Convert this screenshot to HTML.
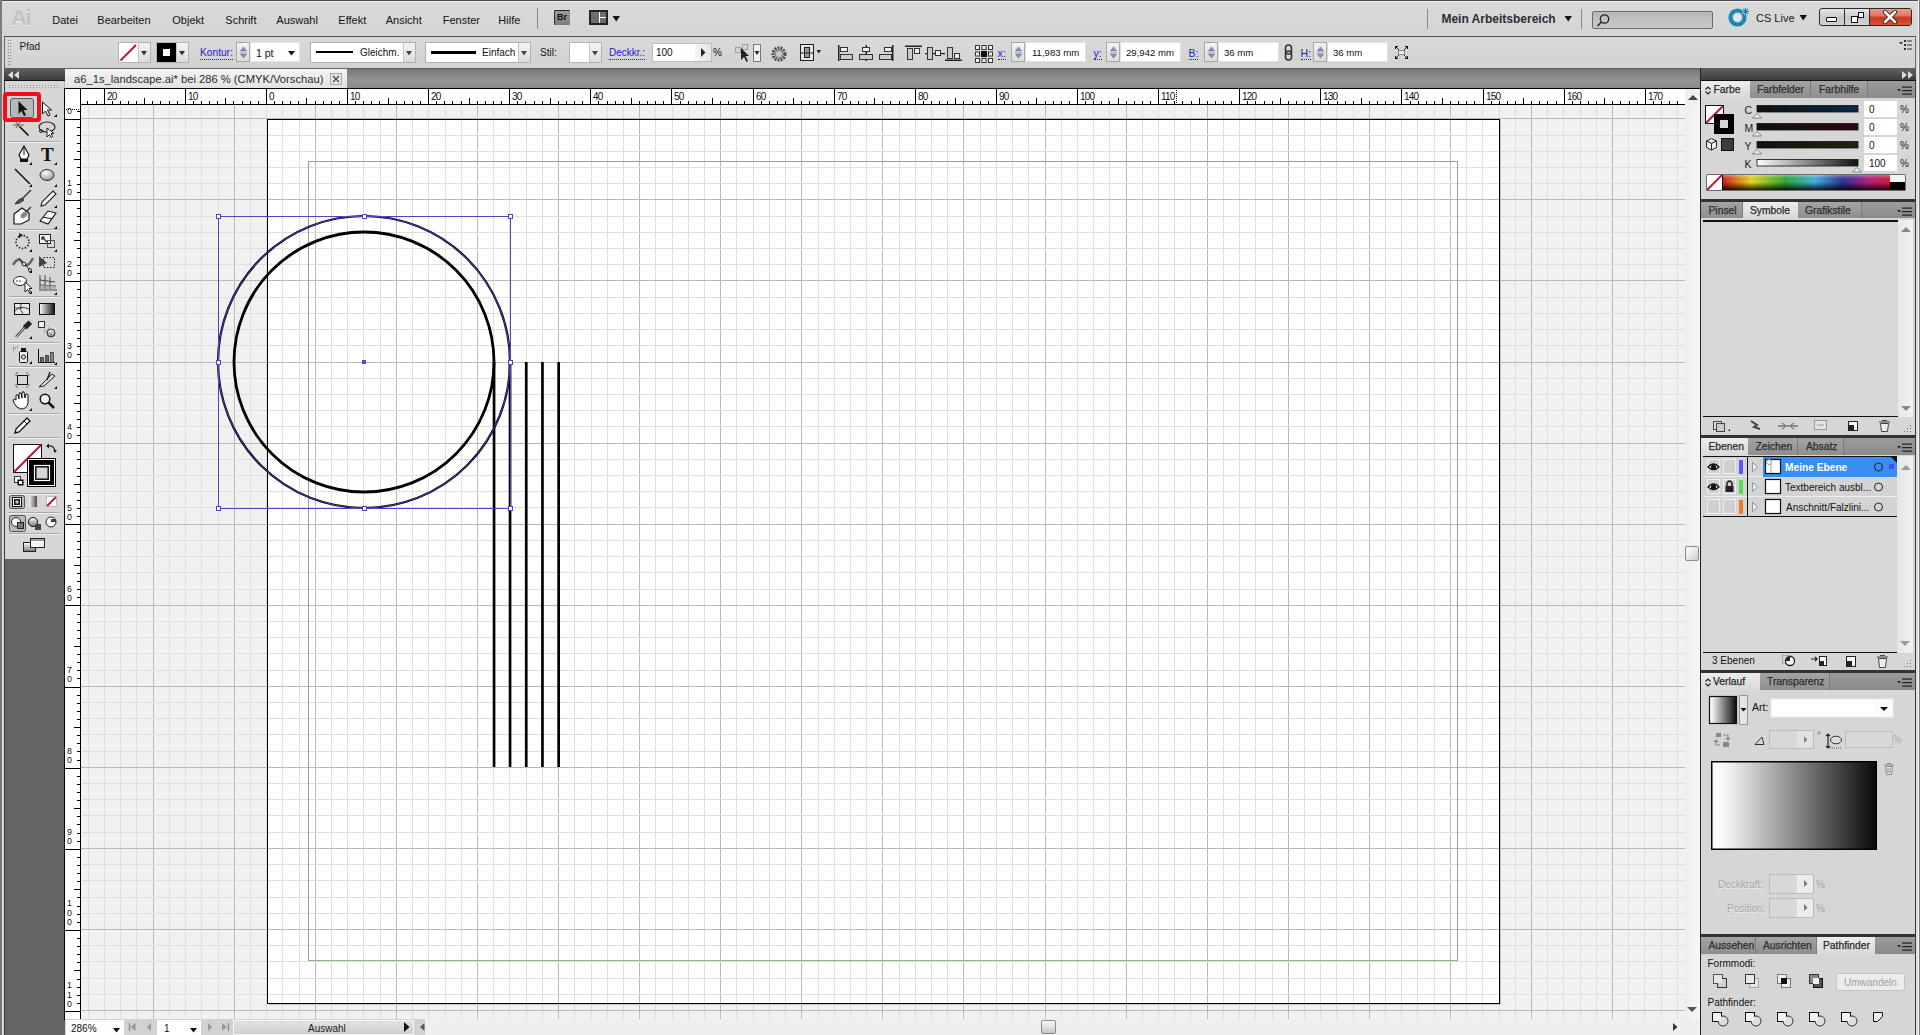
<!DOCTYPE html><html><head><meta charset="utf-8"><style>
*{margin:0;padding:0;box-sizing:border-box}
html,body{width:1920px;height:1035px;overflow:hidden;background:#d6d6d6;font-family:"Liberation Sans",sans-serif;font-size:12px;color:#111}
.a{position:absolute}
.t{position:absolute;white-space:nowrap;line-height:1}
</style></head><body>
<div class="a" style="left:0px;top:0px;width:1920px;height:36px;background:linear-gradient(#dadada,#d4d4d4)"></div>
<div class="a" style="left:0px;top:0px;width:1920px;height:1px;background:#4a4a4a"></div>
<div class="a" style="left:2px;top:1px;width:1916px;height:1px;background:#f2f2f2"></div>
<div class="t" style="left:11px;top:7px;font-size:22px;font-weight:bold;color:#c2c2c2;letter-spacing:-1.5px;text-shadow:0 1px 0 #ececec">Ai</div>
<div class="t" style="left:52.3px;top:15.31px;font-size:11px;color:#141414;font-weight:normal;">Datei</div>
<div class="t" style="left:97.3px;top:15.31px;font-size:11px;color:#141414;font-weight:normal;">Bearbeiten</div>
<div class="t" style="left:172.3px;top:15.31px;font-size:11px;color:#141414;font-weight:normal;">Objekt</div>
<div class="t" style="left:225.3px;top:15.31px;font-size:11px;color:#141414;font-weight:normal;">Schrift</div>
<div class="t" style="left:276.3px;top:15.31px;font-size:11px;color:#141414;font-weight:normal;">Auswahl</div>
<div class="t" style="left:338.3px;top:15.31px;font-size:11px;color:#141414;font-weight:normal;">Effekt</div>
<div class="t" style="left:385.7px;top:15.31px;font-size:11px;color:#141414;font-weight:normal;">Ansicht</div>
<div class="t" style="left:442.7px;top:15.31px;font-size:11px;color:#141414;font-weight:normal;">Fenster</div>
<div class="t" style="left:498.3px;top:15.31px;font-size:11px;color:#141414;font-weight:normal;">Hilfe</div>
<div class="a" style="left:537px;top:8px;width:1px;height:21px;background:#8a8a8a"></div>
<div class="a" style="left:554px;top:10px;width:16px;height:15px;background:linear-gradient(#9a9a9a,#7c7c7c);border-top:1px solid #222;border-left:1px solid #333;border-radius:1px"></div>
<div class="t" style="left:557px;top:13px;font-size:9px;font-weight:bold;color:#111">Br</div>
<div class="a" style="left:589px;top:10px;width:19px;height:15px;background:#fff;border:2px solid #222"></div>
<div class="a" style="left:591px;top:12px;width:8px;height:11px;background:#6e6e6e"></div>
<div class="a" style="left:600px;top:12px;width:6px;height:5px;background:#6e6e6e"></div>
<div class="a" style="left:600px;top:18px;width:6px;height:5px;background:#6e6e6e"></div>
<svg class="a" style="left:612px;top:15px" width="9" height="8"><path d="M0.5 1 L8 1 L4.25 6.5 Z" fill="#111"/></svg>
<div class="a" style="left:1427px;top:9px;width:1px;height:20px;background:#8a8a8a"></div>
<div class="t" style="left:1441.4px;top:13.22px;font-size:12px;color:#2a2e38;font-weight:bold;">Mein Arbeitsbereich</div>
<svg class="a" style="left:1564px;top:15px" width="9" height="8"><path d="M0.5 1 L8 1 L4.25 6.5 Z" fill="#111"/></svg>
<div class="a" style="left:1581px;top:9px;width:1px;height:20px;background:#8a8a8a"></div>
<div class="a" style="left:1592px;top:11px;width:121px;height:18px;background:linear-gradient(#b8b8b8,#c8c8c8);border:1px solid #6a6a6a;border-radius:2px"></div>
<svg class="a" style="left:1595px;top:12px" width="16" height="16"><circle cx="9.5" cy="7" r="4.2" fill="none" stroke="#222" stroke-width="1.3"/><path d="M6.5 10 L2.5 14" stroke="#222" stroke-width="1.6"/></svg>
<svg class="a" style="left:1727px;top:7px" width="24" height="21"><circle cx="10.5" cy="10.5" r="7" fill="none" stroke="#1b87b3" stroke-width="4.2"/><circle cx="10.5" cy="10.5" r="3.5" fill="#dde9ee"/><circle cx="18.5" cy="4.5" r="3.6" fill="#dcdcdc"/><path d="M18.5 1 v7 M15 4.5 h7 M16 2 l5 5 M21 2 l-5 5" stroke="#1b87b3" stroke-width="1.1"/></svg>
<div class="t" style="left:1756px;top:13.31px;font-size:11px;color:#1a1a1a;font-weight:normal;">CS Live</div>
<svg class="a" style="left:1799px;top:14px" width="9" height="8"><path d="M0.5 1 L8 1 L4.25 6.5 Z" fill="#111"/></svg>
<div class="a" style="left:1819px;top:8px;width:93px;height:18px;border:1px solid #2a2a2a;border-radius:3px;background:linear-gradient(#e6e6e6,#c8c8c8 55%,#d4d4d4)"></div>
<div class="a" style="left:1844px;top:9px;width:1px;height:16px;background:#2a2a2a"></div>
<div class="a" style="left:1869px;top:9px;width:1px;height:16px;background:#2a2a2a"></div>
<div class="a" style="left:1870px;top:9px;width:41px;height:16px;background:linear-gradient(#e89a8c,#e07a68 40%,#c8391c 55%,#d8553a);border-radius:0 2px 2px 0"></div>
<div class="a" style="left:1826px;top:17px;width:11px;height:5px;background:#fff;border:1px solid #111;border-radius:1px"></div>
<div class="a" style="left:1858px;top:12px;width:6px;height:6px;background:#fff;border:1px solid #111"></div>
<div class="a" style="left:1851px;top:16px;width:7px;height:7px;background:#fff;border:1px solid #111"></div>
<svg class="a" style="left:1882px;top:10px" width="16" height="14"><path d="M3 2 L13 12 M13 2 L3 12" stroke="#3a1a10" stroke-width="4.4" stroke-linecap="round"/><path d="M3 2 L13 12 M13 2 L3 12" stroke="#fff" stroke-width="2.6" stroke-linecap="round"/></svg>
<div class="a" style="left:0;top:0;width:2px;height:1035px;background:#7a7a7a"></div>
<div class="a" style="left:1918px;top:0;width:2px;height:1035px;background:#9a9a9a"></div>
<div class="a" style="left:4px;top:36px;width:1912px;height:33px;background:linear-gradient(#d9d9d9,#d2d2d2);border-top:1px solid #4e4e4e;border-left:1px solid #6a6a6a;border-right:1px solid #6a6a6a"></div>
<div class="a" style="left:4px;top:68px;width:1912px;height:1px;background:#8a8a8a"></div>
<svg class="a" style="left:8px;top:40px" width="4" height="26"><rect x="0" y="0" width="1" height="1" fill="#888"/><rect x="2" y="0" width="1" height="1" fill="#888"/><rect x="0" y="3" width="1" height="1" fill="#888"/><rect x="2" y="3" width="1" height="1" fill="#888"/><rect x="0" y="6" width="1" height="1" fill="#888"/><rect x="2" y="6" width="1" height="1" fill="#888"/><rect x="0" y="9" width="1" height="1" fill="#888"/><rect x="2" y="9" width="1" height="1" fill="#888"/><rect x="0" y="12" width="1" height="1" fill="#888"/><rect x="2" y="12" width="1" height="1" fill="#888"/><rect x="0" y="15" width="1" height="1" fill="#888"/><rect x="2" y="15" width="1" height="1" fill="#888"/><rect x="0" y="18" width="1" height="1" fill="#888"/><rect x="2" y="18" width="1" height="1" fill="#888"/><rect x="0" y="21" width="1" height="1" fill="#888"/><rect x="2" y="21" width="1" height="1" fill="#888"/><rect x="0" y="24" width="1" height="1" fill="#888"/><rect x="2" y="24" width="1" height="1" fill="#888"/></svg>
<div class="t" style="left:19.5px;top:42.10px;font-size:10px;color:#1a1a1a;font-weight:normal;">Pfad</div>
<div class="a" style="left:118px;top:42px;width:33px;height:21px;background:#fff;border:1px solid #b4b4b4"></div>
<div class="a" style="left:138px;top:43px;width:12px;height:19px;background:linear-gradient(#f4f4f4,#dcdcdc);border-left:1px solid #c4c4c4"></div>
<svg class="a" style="left:119px;top:43px" width="19" height="19"><path d="M1.5 17.5 L17 2" stroke="#c2123a" stroke-width="2"/></svg>
<svg class="a" style="left:141px;top:51px" width="6" height="5"><path d="M0 0 L6 0 L3.0 4.5 Z" fill="#333"/></svg>
<div class="a" style="left:156px;top:42px;width:33px;height:21px;background:#fff;border:1px solid #b4b4b4"></div>
<div class="a" style="left:157px;top:43px;width:19px;height:19px;background:#000"></div>
<div class="a" style="left:163px;top:49px;width:7px;height:7px;background:#fff"></div>
<div class="a" style="left:176px;top:43px;width:12px;height:19px;background:linear-gradient(#f4f4f4,#dcdcdc);border-left:1px solid #c4c4c4"></div>
<svg class="a" style="left:179px;top:51px" width="6" height="5"><path d="M0 0 L6 0 L3.0 4.5 Z" fill="#333"/></svg>
<div class="t" style="left:200px;top:47.94px;font-size:10.2px;color:#2222cc;font-weight:normal;border-bottom:1px dotted #2222cc;padding-bottom:1px">Kontur:</div>
<div class="a" style="left:236px;top:42px;width:14px;height:20px;background:linear-gradient(#f2f2f2,#dcdcdc);border:1px solid #a8a8a8"></div>
<svg class="a" style="left:239px;top:45px" width="9" height="15"><path d="M1.5 6 L4.5 2 L7.5 6 Z" fill="#8a94c0" stroke="#5a64a0" stroke-width="0.6"/><path d="M1.5 9 L4.5 13 L7.5 9 Z" fill="#8a94c0" stroke="#5a64a0" stroke-width="0.6"/><path d="M0 7.5 H9" stroke="#c4c4c4"/></svg>
<div class="a" style="left:250px;top:42px;width:50px;height:20px;background:#fff;border:1px solid #e4e4e4"></div>
<div class="t" style="left:256px;top:47.70px;font-size:10.5px;color:#111;font-weight:normal;">1 pt</div>
<svg class="a" style="left:288px;top:51px" width="7" height="5"><path d="M0 0 L7 0 L3.5 4.5 Z" fill="#111"/></svg>
<div class="a" style="left:310px;top:42px;width:106px;height:21px;background:#fff;border:1px solid #b0b0b0"></div>
<div class="a" style="left:316px;top:51px;width:37px;height:2px;background:#000"></div>
<div class="t" style="left:360px;top:48.10px;font-size:10px;color:#111;font-weight:normal;">Gleichm.</div>
<div class="a" style="left:403px;top:43px;width:12px;height:19px;background:linear-gradient(#f4f4f4,#dcdcdc);border-left:1px solid #c4c4c4"></div>
<svg class="a" style="left:406px;top:51px" width="6" height="5"><path d="M0 0 L6 0 L3.0 4.5 Z" fill="#444"/></svg>
<div class="a" style="left:425px;top:42px;width:106px;height:21px;background:#fff;border:1px solid #b0b0b0"></div>
<div class="a" style="left:431px;top:51px;width:45px;height:3px;background:#000"></div>
<div class="t" style="left:482px;top:48.10px;font-size:10px;color:#111;font-weight:normal;">Einfach</div>
<div class="a" style="left:518px;top:43px;width:12px;height:19px;background:linear-gradient(#f4f4f4,#dcdcdc);border-left:1px solid #c4c4c4"></div>
<svg class="a" style="left:521px;top:51px" width="6" height="5"><path d="M0 0 L6 0 L3.0 4.5 Z" fill="#444"/></svg>
<div class="t" style="left:540px;top:48.10px;font-size:10px;color:#111;font-weight:normal;">Stil:</div>
<div class="a" style="left:569px;top:42px;width:33px;height:21px;background:#fff;border:1px solid #b4b4b4"></div>
<div class="a" style="left:589px;top:43px;width:12px;height:19px;background:linear-gradient(#f4f4f4,#dcdcdc);border-left:1px solid #c4c4c4"></div>
<svg class="a" style="left:592px;top:51px" width="6" height="5"><path d="M0 0 L6 0 L3.0 4.5 Z" fill="#444"/></svg>
<div class="t" style="left:609px;top:48.10px;font-size:10px;color:#2222cc;font-weight:normal;border-bottom:1px dotted #2222cc;padding-bottom:1px">Deckkr.:</div>
<div class="a" style="left:652px;top:43px;width:60px;height:19px;background:#fff;border:1px solid #bcbcbc"></div>
<div class="a" style="left:695px;top:44px;width:16px;height:17px;background:linear-gradient(90deg,#f4f4f4,#e4e4e4)"></div>
<svg class="a" style="left:701px;top:48px" width="5" height="9"><path d="M0 0 L4.5 4.5 L0 9 Z" fill="#222"/></svg>
<div class="t" style="left:656px;top:48.10px;font-size:10px;color:#111;font-weight:normal;">100</div>
<div class="t" style="left:713px;top:48.10px;font-size:10px;color:#111;font-weight:normal;">%</div>
<svg class="a" style="left:734px;top:43px" width="28" height="20"><rect x="1.5" y="4.5" width="5" height="5" fill="none" stroke="#666" stroke-dasharray="1 1"/><rect x="8.5" y="1.5" width="5" height="5" fill="none" stroke="#666" stroke-dasharray="1 1"/><path d="M7 5 L7 17 L10 14 L12.5 19 L14 18 L11.5 13 L15 13 Z" fill="#222"/><rect x="19.5" y="1.5" width="7" height="17" fill="#f2f2f2" stroke="#777"/><path d="M20.5 8 L25.5 8 L23 12 Z" fill="#222"/></svg>
<svg class="a" style="left:771px;top:46px" width="16" height="16"><circle cx="8" cy="8" r="6" fill="none" stroke="#444" stroke-width="3.2" stroke-dasharray="1.8 1.1"/><circle cx="8" cy="8" r="4.6" fill="#8a8a8a"/><circle cx="8" cy="8" r="3" fill="#c8c8c8"/></svg>
<svg class="a" style="left:800px;top:44px" width="24" height="18"><rect x="0.5" y="0.5" width="13" height="16" fill="#e6e6e6" stroke="#222"/><rect x="4.5" y="3.5" width="5" height="10" fill="#999" stroke="#222"/><path d="M0 9 H14" stroke="#222"/><path d="M16.5 6 L21 6 L18.75 9.5 Z" fill="#222"/></svg>
<svg class="a" style="left:838px;top:45px" width="130" height="17"><rect x="0" y="0" width="1.5" height="16" fill="#222"/><rect x="2.5" y="2.5" width="7" height="4" fill="#eee" stroke="#333"/><rect x="2.5" y="9.5" width="12" height="5" fill="#ccc" stroke="#333"/><rect x="27.5" y="0" width="1.5" height="16" fill="#222"/><rect x="24.5" y="2.5" width="7" height="4" fill="#eee" stroke="#333"/><rect x="21.5" y="9.5" width="13" height="5" fill="#ccc" stroke="#333"/><rect x="54" y="0" width="1.5" height="16" fill="#222"/><rect x="46.5" y="2.5" width="7" height="4" fill="#eee" stroke="#333"/><rect x="41.5" y="9.5" width="12" height="5" fill="#ccc" stroke="#333"/><rect x="67" y="0.5" width="17" height="1.5" fill="#222"/><rect x="69.5" y="3.5" width="5" height="11" fill="#ccc" stroke="#333"/><rect x="76.5" y="3.5" width="5" height="5" fill="#eee" stroke="#333"/><rect x="87" y="8" width="20" height="1.2" fill="#222"/><rect x="89.5" y="2.5" width="5" height="12" fill="#ccc" stroke="#333"/><rect x="97.5" y="5.5" width="5" height="5" fill="#eee" stroke="#333"/><rect x="107" y="14.5" width="17" height="1.5" fill="#222"/><rect x="109.5" y="2.5" width="5" height="11" fill="#ccc" stroke="#333"/><rect x="116.5" y="8.5" width="5" height="5" fill="#eee" stroke="#333"/></svg>
<svg class="a" style="left:974px;top:44px" width="20" height="19"><rect x="1.5" y="1.5" width="4" height="4" fill="#f4f4f4" stroke="#333"/><rect x="1.5" y="8.0" width="4" height="4" fill="#f4f4f4" stroke="#333"/><rect x="1.5" y="14.5" width="4" height="4" fill="#f4f4f4" stroke="#333"/><rect x="8.0" y="1.5" width="4" height="4" fill="#f4f4f4" stroke="#333"/><rect x="8.0" y="8.0" width="4" height="4" fill="#f4f4f4" stroke="#333"/><rect x="8.0" y="14.5" width="4" height="4" fill="#f4f4f4" stroke="#333"/><rect x="14.5" y="1.5" width="4" height="4" fill="#f4f4f4" stroke="#333"/><rect x="14.5" y="8.0" width="4" height="4" fill="#f4f4f4" stroke="#333"/><rect x="14.5" y="14.5" width="4" height="4" fill="#f4f4f4" stroke="#333"/><rect x="7" y="7" width="6" height="6" fill="#111"/></svg>
<div class="t" style="left:997.5px;top:47.70px;font-size:10.5px;color:#2222cc;font-weight:normal;border-bottom:1px dotted #2222cc;padding-bottom:1px">x:</div>
<div class="a" style="left:1011px;top:42px;width:14px;height:20px;background:linear-gradient(#f2f2f2,#dcdcdc);border:1px solid #a8a8a8"></div>
<svg class="a" style="left:1014px;top:45px" width="9" height="15"><path d="M1.5 6 L4.5 2 L7.5 6 Z" fill="#8a94c0" stroke="#5a64a0" stroke-width="0.6"/><path d="M1.5 9 L4.5 13 L7.5 9 Z" fill="#8a94c0" stroke="#5a64a0" stroke-width="0.6"/><path d="M0 7.5 H9" stroke="#c4c4c4"/></svg>
<div class="a" style="left:1025px;top:42px;width:61px;height:20px;background:#fff;border:1px solid #e0e0e0"></div>
<div class="t" style="left:1032px;top:48.42px;font-size:9.6px;color:#111;font-weight:normal;">11,983 mm</div>
<div class="t" style="left:1093.5px;top:47.70px;font-size:10.5px;color:#2222cc;font-weight:normal;border-bottom:1px dotted #2222cc;padding-bottom:1px">y:</div>
<div class="a" style="left:1106px;top:42px;width:14px;height:20px;background:linear-gradient(#f2f2f2,#dcdcdc);border:1px solid #a8a8a8"></div>
<svg class="a" style="left:1109px;top:45px" width="9" height="15"><path d="M1.5 6 L4.5 2 L7.5 6 Z" fill="#8a94c0" stroke="#5a64a0" stroke-width="0.6"/><path d="M1.5 9 L4.5 13 L7.5 9 Z" fill="#8a94c0" stroke="#5a64a0" stroke-width="0.6"/><path d="M0 7.5 H9" stroke="#c4c4c4"/></svg>
<div class="a" style="left:1120px;top:42px;width:61px;height:20px;background:#fff;border:1px solid #e0e0e0"></div>
<div class="t" style="left:1126px;top:48.42px;font-size:9.6px;color:#111;font-weight:normal;">29,942 mm</div>
<div class="t" style="left:1188.5px;top:47.70px;font-size:10.5px;color:#2222cc;font-weight:normal;border-bottom:1px dotted #2222cc;padding-bottom:1px">B:</div>
<div class="a" style="left:1204px;top:42px;width:14px;height:20px;background:linear-gradient(#f2f2f2,#dcdcdc);border:1px solid #a8a8a8"></div>
<svg class="a" style="left:1207px;top:45px" width="9" height="15"><path d="M1.5 6 L4.5 2 L7.5 6 Z" fill="#8a94c0" stroke="#5a64a0" stroke-width="0.6"/><path d="M1.5 9 L4.5 13 L7.5 9 Z" fill="#8a94c0" stroke="#5a64a0" stroke-width="0.6"/><path d="M0 7.5 H9" stroke="#c4c4c4"/></svg>
<div class="a" style="left:1218px;top:42px;width:61px;height:20px;background:#fff;border:1px solid #e0e0e0"></div>
<div class="t" style="left:1224px;top:48.42px;font-size:9.6px;color:#111;font-weight:normal;">36 mm</div>
<svg class="a" style="left:1284px;top:44px" width="10" height="18"><rect x="1.5" y="1" width="6" height="9" rx="3" fill="none" stroke="#333" stroke-width="1.6"/><rect x="1.5" y="7" width="6" height="9" rx="3" fill="none" stroke="#333" stroke-width="1.6"/></svg>
<div class="t" style="left:1300.5px;top:47.70px;font-size:10.5px;color:#2222cc;font-weight:normal;border-bottom:1px dotted #2222cc;padding-bottom:1px">H:</div>
<div class="a" style="left:1313px;top:42px;width:14px;height:20px;background:linear-gradient(#f2f2f2,#dcdcdc);border:1px solid #a8a8a8"></div>
<svg class="a" style="left:1316px;top:45px" width="9" height="15"><path d="M1.5 6 L4.5 2 L7.5 6 Z" fill="#8a94c0" stroke="#5a64a0" stroke-width="0.6"/><path d="M1.5 9 L4.5 13 L7.5 9 Z" fill="#8a94c0" stroke="#5a64a0" stroke-width="0.6"/><path d="M0 7.5 H9" stroke="#c4c4c4"/></svg>
<div class="a" style="left:1327px;top:42px;width:61px;height:20px;background:#fff;border:1px solid #e0e0e0"></div>
<div class="t" style="left:1333px;top:48.42px;font-size:9.6px;color:#111;font-weight:normal;">36 mm</div>
<svg class="a" style="left:1394px;top:45px" width="15" height="15"><path d="M1.5 1.5 L5 5 M13.5 1.5 L10 5 M1.5 13.5 L5 10 M13.5 13.5 L10 10" stroke="#222" stroke-width="1"/><path d="M1 1 h3 v1 h-2 v2 h-1 Z M14 1 h-3 v1 h2 v2 h1 Z M1 14 h3 v-1 h-2 v-2 h-1 Z M14 14 h-3 v-1 h2 v-2 h1 Z" fill="#111"/><rect x="4.5" y="5.5" width="6" height="4" fill="#e8e8e8" stroke="#888"/></svg>
<svg class="a" style="left:1899px;top:40px" width="14" height="11"><path d="M0 2 L4 2 L2 4.5 Z" fill="#333"/><rect x="5" y="0" width="2" height="2" fill="#333"/><rect x="8" y="0.5" width="5" height="1" fill="#333"/><rect x="5" y="4" width="2" height="2" fill="#333"/><rect x="8" y="4.5" width="5" height="1" fill="#333"/><rect x="5" y="8" width="2" height="2" fill="#333"/><rect x="8" y="8.5" width="5" height="1" fill="#333"/></svg>
<div class="a" style="left:4px;top:68px;width:61px;height:13px;background:linear-gradient(#606060,#3c3c3c);border-bottom:1px solid #111"></div>
<svg class="a" style="left:8px;top:71px" width="12" height="8"><path d="M5 0 L0 4 L5 8 Z M11 0 L6 4 L11 8 Z" fill="#ddd"/></svg>
<div class="a" style="left:4px;top:81px;width:61px;height:478px;background:#d6d6d6;border-left:1px solid #3a3a3a;border-right:1px solid #b8b8b8"></div>
<div class="a" style="left:4px;top:559px;width:61px;height:476px;background:#646464;border-left:1px solid #3a3a3a"></div>
<svg class="a" style="left:0px;top:81px" width="66" height="478" viewBox="0 81 66 478"><rect x="9" y="85" width="1" height="1" fill="#999"/><rect x="9" y="87" width="1" height="1" fill="#999"/><rect x="12" y="85" width="1" height="1" fill="#999"/><rect x="12" y="87" width="1" height="1" fill="#999"/><rect x="15" y="85" width="1" height="1" fill="#999"/><rect x="15" y="87" width="1" height="1" fill="#999"/><rect x="18" y="85" width="1" height="1" fill="#999"/><rect x="18" y="87" width="1" height="1" fill="#999"/><rect x="21" y="85" width="1" height="1" fill="#999"/><rect x="21" y="87" width="1" height="1" fill="#999"/><rect x="24" y="85" width="1" height="1" fill="#999"/><rect x="24" y="87" width="1" height="1" fill="#999"/><rect x="27" y="85" width="1" height="1" fill="#999"/><rect x="27" y="87" width="1" height="1" fill="#999"/><rect x="30" y="85" width="1" height="1" fill="#999"/><rect x="30" y="87" width="1" height="1" fill="#999"/><rect x="33" y="85" width="1" height="1" fill="#999"/><rect x="33" y="87" width="1" height="1" fill="#999"/><rect x="36" y="85" width="1" height="1" fill="#999"/><rect x="36" y="87" width="1" height="1" fill="#999"/><rect x="39" y="85" width="1" height="1" fill="#999"/><rect x="39" y="87" width="1" height="1" fill="#999"/><rect x="42" y="85" width="1" height="1" fill="#999"/><rect x="42" y="87" width="1" height="1" fill="#999"/><rect x="45" y="85" width="1" height="1" fill="#999"/><rect x="45" y="87" width="1" height="1" fill="#999"/><rect x="48" y="85" width="1" height="1" fill="#999"/><rect x="48" y="87" width="1" height="1" fill="#999"/><rect x="51" y="85" width="1" height="1" fill="#999"/><rect x="51" y="87" width="1" height="1" fill="#999"/><rect x="54" y="85" width="1" height="1" fill="#999"/><rect x="54" y="87" width="1" height="1" fill="#999"/><rect x="57" y="85" width="1" height="1" fill="#999"/><rect x="57" y="87" width="1" height="1" fill="#999"/><rect x="8" y="141" width="52" height="1" fill="#aaa"/><rect x="8" y="142" width="52" height="1" fill="#f0f0f0"/><rect x="8" y="229" width="52" height="1" fill="#aaa"/><rect x="8" y="230" width="52" height="1" fill="#f0f0f0"/><rect x="8" y="296" width="52" height="1" fill="#aaa"/><rect x="8" y="297" width="52" height="1" fill="#f0f0f0"/><rect x="8" y="342" width="52" height="1" fill="#aaa"/><rect x="8" y="343" width="52" height="1" fill="#f0f0f0"/><rect x="8" y="366" width="52" height="1" fill="#aaa"/><rect x="8" y="367" width="52" height="1" fill="#f0f0f0"/><rect x="8" y="413" width="52" height="1" fill="#aaa"/><rect x="8" y="414" width="52" height="1" fill="#f0f0f0"/><rect x="8" y="437" width="52" height="1" fill="#aaa"/><rect x="8" y="438" width="52" height="1" fill="#f0f0f0"/><rect x="8" y="493" width="52" height="1" fill="#aaa"/><rect x="8" y="494" width="52" height="1" fill="#f0f0f0"/><rect x="8" y="512" width="52" height="1" fill="#aaa"/><rect x="8" y="513" width="52" height="1" fill="#f0f0f0"/><rect x="8" y="533" width="52" height="1" fill="#aaa"/><rect x="8" y="534" width="52" height="1" fill="#f0f0f0"/><rect x="10.5" y="98.5" width="23" height="19" rx="2.5" fill="#b8b8bc" stroke="#5a5a5a"/><rect x="5" y="94" width="34" height="26" rx="1.5" fill="none" stroke="#f01018" stroke-width="4"/><path d="M18.5 101 L18.5 114 L21.5 111 L24 116 L26 115 L23.5 110 L27.5 110 Z" fill="#111"/><path d="M42.5 102 L42.5 114 L45.5 111 L48 116 L50 115 L47.5 110 L51.5 110 Z" fill="#fff" stroke="#111" stroke-width="1"/><path d="M54 117 L57 117 L57 114 Z" fill="#111"/><path d="M19.5 126.5 L28.5 135.5" stroke="#111" stroke-width="1.7"/><path d="M13 125 h11 M16 122 l4 6 M20 122 l-4 6" stroke="#555" stroke-width="0.9"/><ellipse cx="47" cy="127" rx="8" ry="5" fill="none" stroke="#222" stroke-width="1.2"/><path d="M47 128 L47 137 L49.5 134.5 L51 137.5 L52.5 136.5 L51 133.5 L54 133.5 Z" fill="#fff" stroke="#222"/><circle cx="41" cy="131" r="1.5" fill="none" stroke="#222"/><path d="M24 146 L29 155 L27 159 L21 159 L19 155 Z" fill="#fff" stroke="#111" stroke-width="1.2"/><path d="M24 146 v9" stroke="#111"/><rect x="20" y="159" width="8" height="3" fill="#111"/><path d="M29 165 L32 165 L32 162 Z" fill="#111"/><text x="41" y="161" font-family="Liberation Serif" font-size="19" font-weight="bold" fill="#111">T</text><path d="M54 165 L57 165 L57 162 Z" fill="#111"/><path d="M15 169 L30 184" stroke="#111" stroke-width="1.5"/><path d="M29 187 L32 187 L32 184 Z" fill="#111"/><defs><radialGradient id="eg" cx="0.4" cy="0.3" r="0.8"><stop offset="0" stop-color="#fff"/><stop offset="1" stop-color="#888"/></radialGradient><linearGradient id="gg" x1="0" x2="1"><stop offset="0" stop-color="#fff"/><stop offset="1" stop-color="#111"/></linearGradient><linearGradient id="gv" x1="0" x2="0" y1="0" y2="1"><stop offset="0" stop-color="#fff"/><stop offset="1" stop-color="#777"/></linearGradient></defs><ellipse cx="47" cy="175" rx="7" ry="5.5" fill="url(#eg)" stroke="#333"/><path d="M54 187 L57 187 L57 184 Z" fill="#111"/><path d="M31 190 L22 199" stroke="#333" stroke-width="1.5"/><path d="M22 198 Q17 200 15 204 Q20 204 24 200 Z" fill="#555" stroke="#222" stroke-width="0.8"/><path d="M53 191 L56 194 L45 205 L41 206 L42 202 Z" fill="#fff" stroke="#222" stroke-width="1.1"/><path d="M54 208 L57 208 L57 205 Z" fill="#111"/><path d="M14 214 L22 208 L29 213 L29 220 L21 224 L14 224 Z" fill="#fff" stroke="#111" stroke-width="1.2"/><path d="M31 207 L22 216" stroke="#333" stroke-width="1.4"/><ellipse cx="24" cy="215" rx="4" ry="2.5" fill="#888" transform="rotate(-40 24 215)"/><path d="M40 221 L48 211 L56 213 L48 224 Z" fill="#fff" stroke="#111" stroke-width="1.1"/><path d="M43 217 L52 219" stroke="#111"/><path d="M54 229 L57 229 L57 226 Z" fill="#111"/><circle cx="22.5" cy="242" r="6.5" fill="none" stroke="#222" stroke-width="1.6" stroke-dasharray="1.5 1.6"/><path d="M19 233 L23 235 L19 238 Z" fill="#222"/><path d="M29 252 L32 252 L32 249 Z" fill="#111"/><rect x="39.5" y="234.5" width="11" height="9" fill="#f6f6f6" stroke="#222"/><rect x="47.5" y="240.5" width="7" height="7" fill="none" stroke="#555"/><path d="M42 237 L47 242 M42 237 h3 M42 237 v3" stroke="#222" stroke-width="1.2"/><path d="M54 252 L57 252 L57 249 Z" fill="#111"/><path d="M13 265 Q18 256 22 262 Q27 270 33 258" fill="none" stroke="#666" stroke-width="2.5"/><path d="M19 258 L30 270" stroke="#222"/><circle cx="24" cy="264" r="1.8" fill="#fff" stroke="#222"/><circle cx="30" cy="270" r="1.5" fill="#fff" stroke="#222"/><path d="M29 273 L32 273 L32 270 Z" fill="#111"/><rect x="43.5" y="257.5" width="11" height="10" fill="none" stroke="#222" stroke-dasharray="1.5 1.5"/><path d="M39 256 L39 267 L47 263 Z" fill="#444"/><ellipse cx="20" cy="281" rx="6.5" ry="4.5" fill="#fff" stroke="#222"/><path d="M25 282 L25 292 L27.5 289.5 L29 292.5 L30.5 291.5 L29 288.5 L32 288.5 Z" fill="#fff" stroke="#222"/><circle cx="17" cy="281" r="0.8" fill="#222"/><circle cx="20" cy="281" r="0.8" fill="#222"/><path d="M29 294 L32 294 L32 291 Z" fill="#111"/><path d="M40 275 V291 M45 275 V291 M50 277 V289 M40 280 L55 282 M40 285 L56 286 M40 290 H57" stroke="#444" stroke-width="1"/><rect x="40" y="285" width="16" height="6" fill="#999" opacity="0.6"/><path d="M54 295 L57 295 L57 292 Z" fill="#111"/><rect x="14.5" y="303.5" width="15" height="11" fill="#e8e8e8" stroke="#111"/><path d="M15 311 Q20 305 29 309 M21 304 Q19 310 23 314 M14 308 L22 308" fill="none" stroke="#333" stroke-width="0.9"/><rect x="39.5" y="303.5" width="15" height="11" fill="url(#gg)" stroke="#111"/><path d="M16 337 L26 326" stroke="#222" stroke-width="2.4"/><path d="M16 337 L26 326" stroke="#fff" stroke-width="1"/><rect x="25" y="321" width="5" height="8" fill="#222" transform="rotate(45 27.5 325)"/><path d="M29 339 L32 339 L32 336 Z" fill="#111"/><rect x="38.5" y="321.5" width="6" height="6" fill="#f4f4f4" stroke="#333"/><circle cx="51" cy="333" r="4" fill="url(#gv)" stroke="#333"/><path d="M44 330 h1 M46 330 h1 M44 332 h1 M46 333 h1 M48 328 h1" stroke="#777"/><rect x="19.5" y="351.5" width="8" height="11" rx="1" fill="#eee" stroke="#111"/><circle cx="23.5" cy="357" r="2" fill="none" stroke="#111"/><rect x="21" y="348" width="5" height="3" fill="#111"/><path d="M13 348 h1 M15 348 h1 M13 350 h1 M17 347 h1" stroke="#444"/><path d="M29 364 L32 364 L32 361 Z" fill="#111"/><path d="M38.5 349 V362.5 H55" fill="none" stroke="#111"/><rect x="40.5" y="357.5" width="3" height="5" fill="#666" stroke="#111" stroke-width="0.6"/><rect x="45.5" y="355.5" width="3" height="7" fill="#666" stroke="#111" stroke-width="0.6"/><rect x="50.5" y="352.5" width="3" height="10" fill="#888" stroke="#111" stroke-width="0.6"/><path d="M54 365 L57 365 L57 362 Z" fill="#111"/><rect x="17.5" y="375.5" width="10" height="9" fill="none" stroke="#111"/><path d="M15 375 h2 M15 385 h2 M28 375 h2 M28 385 h2 M17 372 v2 M27 372 v2 M17 386 v2 M27 386 v2" stroke="#666"/><path d="M39 387 L52 374 L55 376 L44 386 Z" fill="#ddd" stroke="#222"/><path d="M50 372 L47 380" stroke="#222" stroke-width="1.5"/><path d="M54 389 L57 389 L57 386 Z" fill="#111"/><path d="M16 400 L16 396 Q16 394 18 395 L19 399 L19 394 Q19 392 21 393 L22 398 L22 393 Q22 391 24 392 L25 398 L26 394 Q27 393 28 395 L28 403 Q27 409 21 409 Q16 408 14 403 L13 400 Q14 398 16 400 Z" fill="#fff" stroke="#111" stroke-width="1"/><path d="M29 411 L32 411 L32 408 Z" fill="#111"/><circle cx="45" cy="399" r="4.8" fill="#eee" stroke="#111" stroke-width="1.5"/><path d="M48.5 402.5 L54 408" stroke="#111" stroke-width="2.5"/><path d="M27 418 L30 421 L19 432 L15 433 L16 429 Z" fill="#fff" stroke="#111" stroke-width="1.3"/><path d="M24 421 L27 424" stroke="#111"/><rect x="13.5" y="444.5" width="28" height="28" fill="#fff" stroke="#111"/><path d="M14 472 L41 445" stroke="#c0103a" stroke-width="2"/><rect x="27" y="458" width="29" height="29" fill="#000"/><rect x="28.5" y="459.5" width="26" height="26" fill="none" stroke="#fff" stroke-width="1"/><rect x="34.5" y="465.5" width="15" height="15" fill="#000" stroke="#fff" stroke-width="1.2"/><rect x="36.5" y="467.5" width="11" height="11" fill="#d4d6da"/><path d="M48 446 Q54 445 55 451" fill="none" stroke="#222" stroke-width="1.2"/><path d="M46 446 L49 443.5 L49 448.5 Z M53 450 L57 450 L55 453 Z" fill="#222"/><rect x="14.5" y="476.5" width="6" height="6" fill="#fff" stroke="#333"/><rect x="17.5" y="479.5" width="6" height="6" fill="#111"/><rect x="19" y="481" width="3" height="3" fill="#fff"/><rect x="9.5" y="495.5" width="15" height="13" rx="2" fill="#b8b8b8" stroke="#555"/><rect x="12.5" y="497.5" width="9" height="9" fill="#fff" stroke="#111" stroke-width="1"/><rect x="14" y="499" width="6" height="6" fill="#111"/><rect x="15.5" y="500.5" width="3" height="3" fill="#ccc"/><rect x="29" y="496" width="8" height="11" fill="url(#gg)" opacity="0.7"/><rect x="46.5" y="496.5" width="10" height="10" fill="#fff" stroke="#bbb"/><path d="M47 506 L56 497" stroke="#c0103a" stroke-width="1.8"/><rect x="9.5" y="515.5" width="16" height="16" rx="2" fill="#b8b8b8" stroke="#555"/><circle cx="16" cy="522" r="4.5" fill="#fff" stroke="#222"/><rect x="17.5" y="522.5" width="6" height="6" fill="#777" stroke="#222"/><circle cx="33" cy="522" r="4.5" fill="#fff" stroke="#222"/><rect x="35" y="524" width="6" height="6" fill="#444"/><circle cx="33" cy="522" r="4.5" fill="url(#gv)" stroke="#222"/><circle cx="51" cy="522" r="5" fill="#fff" stroke="#222"/><path d="M51 522 h5 v-3 h-5 Z" fill="#444"/><rect x="23.5" y="542.5" width="12" height="9" fill="url(#gv)" stroke="#222"/><rect x="30.5" y="538.5" width="14" height="9" fill="#f4f4f4" stroke="#222"/><rect x="31" y="539" width="13" height="2" fill="#999"/></svg>
<div class="a" style="left:65px;top:68px;width:1635px;height:20px;background:linear-gradient(#5a5a5a 0,#7a7a7a 2px,#939393 60%,#8a8a8a);"></div>
<div class="a" style="left:65px;top:69px;width:282px;height:19px;background:linear-gradient(#f4f4f4,#e2e2e2)"></div>
<div class="t" style="left:74px;top:74.15px;font-size:11.2px;color:#2a2a2a;font-weight:normal;">a6_1s_landscape.ai* bei 286 % (CMYK/Vorschau)</div>
<svg class="a" style="left:330px;top:73px" width="12" height="12"><rect x="0.5" y="0.5" width="11" height="11" fill="#e4e4e4" stroke="#aaa"/><path d="M3 3 L9 9 M9 3 L3 9" stroke="#444" stroke-width="1.1"/></svg>
<svg class="a" style="left:64px;top:88px" width="1636" height="17" viewBox="64 88 1636 17" shape-rendering="crispEdges">
<rect x="64" y="88" width="1636" height="17" fill="#fff"/>
<rect x="64" y="88" width="1636" height="1" fill="#000"/>
<rect x="64" y="104" width="1621" height="1" fill="#000"/>
<rect x="87" y="101" width="1" height="3" fill="#000"/>
<rect x="96" y="101" width="1" height="3" fill="#000"/>
<rect x="104" y="89" width="1" height="15" fill="#000"/>
<rect x="112" y="101" width="1" height="3" fill="#000"/>
<rect x="120" y="101" width="1" height="3" fill="#000"/>
<rect x="128" y="101" width="1" height="3" fill="#000"/>
<rect x="136" y="101" width="1" height="3" fill="#000"/>
<rect x="144" y="98" width="1" height="6" fill="#000"/>
<rect x="152" y="101" width="1" height="3" fill="#000"/>
<rect x="160" y="101" width="1" height="3" fill="#000"/>
<rect x="169" y="101" width="1" height="3" fill="#000"/>
<rect x="177" y="101" width="1" height="3" fill="#000"/>
<rect x="185" y="89" width="1" height="15" fill="#000"/>
<rect x="193" y="101" width="1" height="3" fill="#000"/>
<rect x="201" y="101" width="1" height="3" fill="#000"/>
<rect x="209" y="101" width="1" height="3" fill="#000"/>
<rect x="217" y="101" width="1" height="3" fill="#000"/>
<rect x="225" y="98" width="1" height="6" fill="#000"/>
<rect x="233" y="101" width="1" height="3" fill="#000"/>
<rect x="242" y="101" width="1" height="3" fill="#000"/>
<rect x="250" y="101" width="1" height="3" fill="#000"/>
<rect x="258" y="101" width="1" height="3" fill="#000"/>
<rect x="266" y="89" width="1" height="15" fill="#000"/>
<rect x="274" y="101" width="1" height="3" fill="#000"/>
<rect x="282" y="101" width="1" height="3" fill="#000"/>
<rect x="290" y="101" width="1" height="3" fill="#000"/>
<rect x="298" y="101" width="1" height="3" fill="#000"/>
<rect x="306" y="98" width="1" height="6" fill="#000"/>
<rect x="315" y="101" width="1" height="3" fill="#000"/>
<rect x="323" y="101" width="1" height="3" fill="#000"/>
<rect x="331" y="101" width="1" height="3" fill="#000"/>
<rect x="339" y="101" width="1" height="3" fill="#000"/>
<rect x="347" y="89" width="1" height="15" fill="#000"/>
<rect x="355" y="101" width="1" height="3" fill="#000"/>
<rect x="363" y="101" width="1" height="3" fill="#000"/>
<rect x="371" y="101" width="1" height="3" fill="#000"/>
<rect x="379" y="101" width="1" height="3" fill="#000"/>
<rect x="388" y="98" width="1" height="6" fill="#000"/>
<rect x="396" y="101" width="1" height="3" fill="#000"/>
<rect x="404" y="101" width="1" height="3" fill="#000"/>
<rect x="412" y="101" width="1" height="3" fill="#000"/>
<rect x="420" y="101" width="1" height="3" fill="#000"/>
<rect x="428" y="89" width="1" height="15" fill="#000"/>
<rect x="436" y="101" width="1" height="3" fill="#000"/>
<rect x="444" y="101" width="1" height="3" fill="#000"/>
<rect x="452" y="101" width="1" height="3" fill="#000"/>
<rect x="461" y="101" width="1" height="3" fill="#000"/>
<rect x="469" y="98" width="1" height="6" fill="#000"/>
<rect x="477" y="101" width="1" height="3" fill="#000"/>
<rect x="485" y="101" width="1" height="3" fill="#000"/>
<rect x="493" y="101" width="1" height="3" fill="#000"/>
<rect x="501" y="101" width="1" height="3" fill="#000"/>
<rect x="509" y="89" width="1" height="15" fill="#000"/>
<rect x="517" y="101" width="1" height="3" fill="#000"/>
<rect x="525" y="101" width="1" height="3" fill="#000"/>
<rect x="534" y="101" width="1" height="3" fill="#000"/>
<rect x="542" y="101" width="1" height="3" fill="#000"/>
<rect x="550" y="98" width="1" height="6" fill="#000"/>
<rect x="558" y="101" width="1" height="3" fill="#000"/>
<rect x="566" y="101" width="1" height="3" fill="#000"/>
<rect x="574" y="101" width="1" height="3" fill="#000"/>
<rect x="582" y="101" width="1" height="3" fill="#000"/>
<rect x="590" y="89" width="1" height="15" fill="#000"/>
<rect x="598" y="101" width="1" height="3" fill="#000"/>
<rect x="607" y="101" width="1" height="3" fill="#000"/>
<rect x="615" y="101" width="1" height="3" fill="#000"/>
<rect x="623" y="101" width="1" height="3" fill="#000"/>
<rect x="631" y="98" width="1" height="6" fill="#000"/>
<rect x="639" y="101" width="1" height="3" fill="#000"/>
<rect x="647" y="101" width="1" height="3" fill="#000"/>
<rect x="655" y="101" width="1" height="3" fill="#000"/>
<rect x="663" y="101" width="1" height="3" fill="#000"/>
<rect x="671" y="89" width="1" height="15" fill="#000"/>
<rect x="680" y="101" width="1" height="3" fill="#000"/>
<rect x="688" y="101" width="1" height="3" fill="#000"/>
<rect x="696" y="101" width="1" height="3" fill="#000"/>
<rect x="704" y="101" width="1" height="3" fill="#000"/>
<rect x="712" y="98" width="1" height="6" fill="#000"/>
<rect x="720" y="101" width="1" height="3" fill="#000"/>
<rect x="728" y="101" width="1" height="3" fill="#000"/>
<rect x="736" y="101" width="1" height="3" fill="#000"/>
<rect x="744" y="101" width="1" height="3" fill="#000"/>
<rect x="753" y="89" width="1" height="15" fill="#000"/>
<rect x="761" y="101" width="1" height="3" fill="#000"/>
<rect x="769" y="101" width="1" height="3" fill="#000"/>
<rect x="777" y="101" width="1" height="3" fill="#000"/>
<rect x="785" y="101" width="1" height="3" fill="#000"/>
<rect x="793" y="98" width="1" height="6" fill="#000"/>
<rect x="801" y="101" width="1" height="3" fill="#000"/>
<rect x="809" y="101" width="1" height="3" fill="#000"/>
<rect x="817" y="101" width="1" height="3" fill="#000"/>
<rect x="826" y="101" width="1" height="3" fill="#000"/>
<rect x="834" y="89" width="1" height="15" fill="#000"/>
<rect x="842" y="101" width="1" height="3" fill="#000"/>
<rect x="850" y="101" width="1" height="3" fill="#000"/>
<rect x="858" y="101" width="1" height="3" fill="#000"/>
<rect x="866" y="101" width="1" height="3" fill="#000"/>
<rect x="874" y="98" width="1" height="6" fill="#000"/>
<rect x="882" y="101" width="1" height="3" fill="#000"/>
<rect x="890" y="101" width="1" height="3" fill="#000"/>
<rect x="899" y="101" width="1" height="3" fill="#000"/>
<rect x="907" y="101" width="1" height="3" fill="#000"/>
<rect x="915" y="89" width="1" height="15" fill="#000"/>
<rect x="923" y="101" width="1" height="3" fill="#000"/>
<rect x="931" y="101" width="1" height="3" fill="#000"/>
<rect x="939" y="101" width="1" height="3" fill="#000"/>
<rect x="947" y="101" width="1" height="3" fill="#000"/>
<rect x="955" y="98" width="1" height="6" fill="#000"/>
<rect x="963" y="101" width="1" height="3" fill="#000"/>
<rect x="972" y="101" width="1" height="3" fill="#000"/>
<rect x="980" y="101" width="1" height="3" fill="#000"/>
<rect x="988" y="101" width="1" height="3" fill="#000"/>
<rect x="996" y="89" width="1" height="15" fill="#000"/>
<rect x="1004" y="101" width="1" height="3" fill="#000"/>
<rect x="1012" y="101" width="1" height="3" fill="#000"/>
<rect x="1020" y="101" width="1" height="3" fill="#000"/>
<rect x="1028" y="101" width="1" height="3" fill="#000"/>
<rect x="1036" y="98" width="1" height="6" fill="#000"/>
<rect x="1045" y="101" width="1" height="3" fill="#000"/>
<rect x="1053" y="101" width="1" height="3" fill="#000"/>
<rect x="1061" y="101" width="1" height="3" fill="#000"/>
<rect x="1069" y="101" width="1" height="3" fill="#000"/>
<rect x="1077" y="89" width="1" height="15" fill="#000"/>
<rect x="1085" y="101" width="1" height="3" fill="#000"/>
<rect x="1093" y="101" width="1" height="3" fill="#000"/>
<rect x="1101" y="101" width="1" height="3" fill="#000"/>
<rect x="1109" y="101" width="1" height="3" fill="#000"/>
<rect x="1118" y="98" width="1" height="6" fill="#000"/>
<rect x="1126" y="101" width="1" height="3" fill="#000"/>
<rect x="1134" y="101" width="1" height="3" fill="#000"/>
<rect x="1142" y="101" width="1" height="3" fill="#000"/>
<rect x="1150" y="101" width="1" height="3" fill="#000"/>
<rect x="1158" y="89" width="1" height="15" fill="#000"/>
<rect x="1166" y="101" width="1" height="3" fill="#000"/>
<rect x="1174" y="101" width="1" height="3" fill="#000"/>
<rect x="1182" y="101" width="1" height="3" fill="#000"/>
<rect x="1191" y="101" width="1" height="3" fill="#000"/>
<rect x="1199" y="98" width="1" height="6" fill="#000"/>
<rect x="1207" y="101" width="1" height="3" fill="#000"/>
<rect x="1215" y="101" width="1" height="3" fill="#000"/>
<rect x="1223" y="101" width="1" height="3" fill="#000"/>
<rect x="1231" y="101" width="1" height="3" fill="#000"/>
<rect x="1239" y="89" width="1" height="15" fill="#000"/>
<rect x="1247" y="101" width="1" height="3" fill="#000"/>
<rect x="1255" y="101" width="1" height="3" fill="#000"/>
<rect x="1264" y="101" width="1" height="3" fill="#000"/>
<rect x="1272" y="101" width="1" height="3" fill="#000"/>
<rect x="1280" y="98" width="1" height="6" fill="#000"/>
<rect x="1288" y="101" width="1" height="3" fill="#000"/>
<rect x="1296" y="101" width="1" height="3" fill="#000"/>
<rect x="1304" y="101" width="1" height="3" fill="#000"/>
<rect x="1312" y="101" width="1" height="3" fill="#000"/>
<rect x="1320" y="89" width="1" height="15" fill="#000"/>
<rect x="1328" y="101" width="1" height="3" fill="#000"/>
<rect x="1337" y="101" width="1" height="3" fill="#000"/>
<rect x="1345" y="101" width="1" height="3" fill="#000"/>
<rect x="1353" y="101" width="1" height="3" fill="#000"/>
<rect x="1361" y="98" width="1" height="6" fill="#000"/>
<rect x="1369" y="101" width="1" height="3" fill="#000"/>
<rect x="1377" y="101" width="1" height="3" fill="#000"/>
<rect x="1385" y="101" width="1" height="3" fill="#000"/>
<rect x="1393" y="101" width="1" height="3" fill="#000"/>
<rect x="1401" y="89" width="1" height="15" fill="#000"/>
<rect x="1410" y="101" width="1" height="3" fill="#000"/>
<rect x="1418" y="101" width="1" height="3" fill="#000"/>
<rect x="1426" y="101" width="1" height="3" fill="#000"/>
<rect x="1434" y="101" width="1" height="3" fill="#000"/>
<rect x="1442" y="98" width="1" height="6" fill="#000"/>
<rect x="1450" y="101" width="1" height="3" fill="#000"/>
<rect x="1458" y="101" width="1" height="3" fill="#000"/>
<rect x="1466" y="101" width="1" height="3" fill="#000"/>
<rect x="1474" y="101" width="1" height="3" fill="#000"/>
<rect x="1483" y="89" width="1" height="15" fill="#000"/>
<rect x="1491" y="101" width="1" height="3" fill="#000"/>
<rect x="1499" y="101" width="1" height="3" fill="#000"/>
<rect x="1507" y="101" width="1" height="3" fill="#000"/>
<rect x="1515" y="101" width="1" height="3" fill="#000"/>
<rect x="1523" y="98" width="1" height="6" fill="#000"/>
<rect x="1531" y="101" width="1" height="3" fill="#000"/>
<rect x="1539" y="101" width="1" height="3" fill="#000"/>
<rect x="1547" y="101" width="1" height="3" fill="#000"/>
<rect x="1556" y="101" width="1" height="3" fill="#000"/>
<rect x="1564" y="89" width="1" height="15" fill="#000"/>
<rect x="1572" y="101" width="1" height="3" fill="#000"/>
<rect x="1580" y="101" width="1" height="3" fill="#000"/>
<rect x="1588" y="101" width="1" height="3" fill="#000"/>
<rect x="1596" y="101" width="1" height="3" fill="#000"/>
<rect x="1604" y="98" width="1" height="6" fill="#000"/>
<rect x="1612" y="101" width="1" height="3" fill="#000"/>
<rect x="1620" y="101" width="1" height="3" fill="#000"/>
<rect x="1629" y="101" width="1" height="3" fill="#000"/>
<rect x="1637" y="101" width="1" height="3" fill="#000"/>
<rect x="1645" y="89" width="1" height="15" fill="#000"/>
<rect x="1653" y="101" width="1" height="3" fill="#000"/>
<rect x="1661" y="101" width="1" height="3" fill="#000"/>
<rect x="1669" y="101" width="1" height="3" fill="#000"/>
<rect x="1677" y="101" width="1" height="3" fill="#000"/>
<rect x="80" y="89" width="1" height="16" fill="#000"/>
<rect x="64" y="89" width="1" height="16" fill="#000"/>
<rect x="1685" y="89" width="15" height="16" fill="#efefef"/>
<rect x="1176" y="90" width="1" height="1" fill="#111"/>
<rect x="1176" y="92" width="1" height="1" fill="#111"/>
<rect x="1176" y="94" width="1" height="1" fill="#111"/>
<rect x="1176" y="96" width="1" height="1" fill="#111"/>
<rect x="1176" y="98" width="1" height="1" fill="#111"/>
<rect x="1176" y="100" width="1" height="1" fill="#111"/>
<rect x="1176" y="102" width="1" height="1" fill="#111"/>
</svg>
<div class="t" style="left:107px;top:92px;font-size:10px;letter-spacing:-0.8px;color:#111">20</div>
<div class="t" style="left:188px;top:92px;font-size:10px;letter-spacing:-0.8px;color:#111">10</div>
<div class="t" style="left:269px;top:92px;font-size:10px;letter-spacing:-0.8px;color:#111">0</div>
<div class="t" style="left:350px;top:92px;font-size:10px;letter-spacing:-0.8px;color:#111">10</div>
<div class="t" style="left:431px;top:92px;font-size:10px;letter-spacing:-0.8px;color:#111">20</div>
<div class="t" style="left:512px;top:92px;font-size:10px;letter-spacing:-0.8px;color:#111">30</div>
<div class="t" style="left:593px;top:92px;font-size:10px;letter-spacing:-0.8px;color:#111">40</div>
<div class="t" style="left:674px;top:92px;font-size:10px;letter-spacing:-0.8px;color:#111">50</div>
<div class="t" style="left:756px;top:92px;font-size:10px;letter-spacing:-0.8px;color:#111">60</div>
<div class="t" style="left:837px;top:92px;font-size:10px;letter-spacing:-0.8px;color:#111">70</div>
<div class="t" style="left:918px;top:92px;font-size:10px;letter-spacing:-0.8px;color:#111">80</div>
<div class="t" style="left:999px;top:92px;font-size:10px;letter-spacing:-0.8px;color:#111">90</div>
<div class="t" style="left:1080px;top:92px;font-size:10px;letter-spacing:-0.8px;color:#111">100</div>
<div class="t" style="left:1161px;top:92px;font-size:10px;letter-spacing:-0.8px;color:#111">110</div>
<div class="t" style="left:1242px;top:92px;font-size:10px;letter-spacing:-0.8px;color:#111">120</div>
<div class="t" style="left:1323px;top:92px;font-size:10px;letter-spacing:-0.8px;color:#111">130</div>
<div class="t" style="left:1404px;top:92px;font-size:10px;letter-spacing:-0.8px;color:#111">140</div>
<div class="t" style="left:1486px;top:92px;font-size:10px;letter-spacing:-0.8px;color:#111">150</div>
<div class="t" style="left:1567px;top:92px;font-size:10px;letter-spacing:-0.8px;color:#111">160</div>
<div class="t" style="left:1648px;top:92px;font-size:10px;letter-spacing:-0.8px;color:#111">170</div>
<svg class="a" style="left:64px;top:104px" width="17" height="916" viewBox="64 104 17 916" shape-rendering="crispEdges">
<rect x="64" y="104" width="17" height="916" fill="#fff"/>
<rect x="64" y="104" width="1" height="916" fill="#000"/>
<rect x="80" y="104" width="1" height="916" fill="#000"/>
<rect x="77" y="111" width="3" height="1" fill="#000"/>
<rect x="65" y="119" width="15" height="1" fill="#000"/>
<rect x="77" y="127" width="3" height="1" fill="#000"/>
<rect x="77" y="135" width="3" height="1" fill="#000"/>
<rect x="77" y="143" width="3" height="1" fill="#000"/>
<rect x="77" y="151" width="3" height="1" fill="#000"/>
<rect x="74" y="159" width="6" height="1" fill="#000"/>
<rect x="77" y="167" width="3" height="1" fill="#000"/>
<rect x="77" y="175" width="3" height="1" fill="#000"/>
<rect x="77" y="184" width="3" height="1" fill="#000"/>
<rect x="77" y="192" width="3" height="1" fill="#000"/>
<rect x="65" y="200" width="15" height="1" fill="#000"/>
<rect x="77" y="208" width="3" height="1" fill="#000"/>
<rect x="77" y="216" width="3" height="1" fill="#000"/>
<rect x="77" y="224" width="3" height="1" fill="#000"/>
<rect x="77" y="232" width="3" height="1" fill="#000"/>
<rect x="74" y="240" width="6" height="1" fill="#000"/>
<rect x="77" y="248" width="3" height="1" fill="#000"/>
<rect x="77" y="257" width="3" height="1" fill="#000"/>
<rect x="77" y="265" width="3" height="1" fill="#000"/>
<rect x="77" y="273" width="3" height="1" fill="#000"/>
<rect x="65" y="281" width="15" height="1" fill="#000"/>
<rect x="77" y="289" width="3" height="1" fill="#000"/>
<rect x="77" y="297" width="3" height="1" fill="#000"/>
<rect x="77" y="305" width="3" height="1" fill="#000"/>
<rect x="77" y="313" width="3" height="1" fill="#000"/>
<rect x="74" y="322" width="6" height="1" fill="#000"/>
<rect x="77" y="330" width="3" height="1" fill="#000"/>
<rect x="77" y="338" width="3" height="1" fill="#000"/>
<rect x="77" y="346" width="3" height="1" fill="#000"/>
<rect x="77" y="354" width="3" height="1" fill="#000"/>
<rect x="65" y="362" width="15" height="1" fill="#000"/>
<rect x="77" y="370" width="3" height="1" fill="#000"/>
<rect x="77" y="378" width="3" height="1" fill="#000"/>
<rect x="77" y="386" width="3" height="1" fill="#000"/>
<rect x="77" y="395" width="3" height="1" fill="#000"/>
<rect x="74" y="403" width="6" height="1" fill="#000"/>
<rect x="77" y="411" width="3" height="1" fill="#000"/>
<rect x="77" y="419" width="3" height="1" fill="#000"/>
<rect x="77" y="427" width="3" height="1" fill="#000"/>
<rect x="77" y="435" width="3" height="1" fill="#000"/>
<rect x="65" y="443" width="15" height="1" fill="#000"/>
<rect x="77" y="451" width="3" height="1" fill="#000"/>
<rect x="77" y="459" width="3" height="1" fill="#000"/>
<rect x="77" y="468" width="3" height="1" fill="#000"/>
<rect x="77" y="476" width="3" height="1" fill="#000"/>
<rect x="74" y="484" width="6" height="1" fill="#000"/>
<rect x="77" y="492" width="3" height="1" fill="#000"/>
<rect x="77" y="500" width="3" height="1" fill="#000"/>
<rect x="77" y="508" width="3" height="1" fill="#000"/>
<rect x="77" y="516" width="3" height="1" fill="#000"/>
<rect x="65" y="524" width="15" height="1" fill="#000"/>
<rect x="77" y="532" width="3" height="1" fill="#000"/>
<rect x="77" y="541" width="3" height="1" fill="#000"/>
<rect x="77" y="549" width="3" height="1" fill="#000"/>
<rect x="77" y="557" width="3" height="1" fill="#000"/>
<rect x="74" y="565" width="6" height="1" fill="#000"/>
<rect x="77" y="573" width="3" height="1" fill="#000"/>
<rect x="77" y="581" width="3" height="1" fill="#000"/>
<rect x="77" y="589" width="3" height="1" fill="#000"/>
<rect x="77" y="597" width="3" height="1" fill="#000"/>
<rect x="65" y="605" width="15" height="1" fill="#000"/>
<rect x="77" y="614" width="3" height="1" fill="#000"/>
<rect x="77" y="622" width="3" height="1" fill="#000"/>
<rect x="77" y="630" width="3" height="1" fill="#000"/>
<rect x="77" y="638" width="3" height="1" fill="#000"/>
<rect x="74" y="646" width="6" height="1" fill="#000"/>
<rect x="77" y="654" width="3" height="1" fill="#000"/>
<rect x="77" y="662" width="3" height="1" fill="#000"/>
<rect x="77" y="670" width="3" height="1" fill="#000"/>
<rect x="77" y="678" width="3" height="1" fill="#000"/>
<rect x="65" y="687" width="15" height="1" fill="#000"/>
<rect x="77" y="695" width="3" height="1" fill="#000"/>
<rect x="77" y="703" width="3" height="1" fill="#000"/>
<rect x="77" y="711" width="3" height="1" fill="#000"/>
<rect x="77" y="719" width="3" height="1" fill="#000"/>
<rect x="74" y="727" width="6" height="1" fill="#000"/>
<rect x="77" y="735" width="3" height="1" fill="#000"/>
<rect x="77" y="743" width="3" height="1" fill="#000"/>
<rect x="77" y="751" width="3" height="1" fill="#000"/>
<rect x="77" y="760" width="3" height="1" fill="#000"/>
<rect x="65" y="768" width="15" height="1" fill="#000"/>
<rect x="77" y="776" width="3" height="1" fill="#000"/>
<rect x="77" y="784" width="3" height="1" fill="#000"/>
<rect x="77" y="792" width="3" height="1" fill="#000"/>
<rect x="77" y="800" width="3" height="1" fill="#000"/>
<rect x="74" y="808" width="6" height="1" fill="#000"/>
<rect x="77" y="816" width="3" height="1" fill="#000"/>
<rect x="77" y="824" width="3" height="1" fill="#000"/>
<rect x="77" y="833" width="3" height="1" fill="#000"/>
<rect x="77" y="841" width="3" height="1" fill="#000"/>
<rect x="65" y="849" width="15" height="1" fill="#000"/>
<rect x="77" y="857" width="3" height="1" fill="#000"/>
<rect x="77" y="865" width="3" height="1" fill="#000"/>
<rect x="77" y="873" width="3" height="1" fill="#000"/>
<rect x="77" y="881" width="3" height="1" fill="#000"/>
<rect x="74" y="889" width="6" height="1" fill="#000"/>
<rect x="77" y="897" width="3" height="1" fill="#000"/>
<rect x="77" y="906" width="3" height="1" fill="#000"/>
<rect x="77" y="914" width="3" height="1" fill="#000"/>
<rect x="77" y="922" width="3" height="1" fill="#000"/>
<rect x="65" y="930" width="15" height="1" fill="#000"/>
<rect x="77" y="938" width="3" height="1" fill="#000"/>
<rect x="77" y="946" width="3" height="1" fill="#000"/>
<rect x="77" y="954" width="3" height="1" fill="#000"/>
<rect x="77" y="962" width="3" height="1" fill="#000"/>
<rect x="74" y="970" width="6" height="1" fill="#000"/>
<rect x="77" y="979" width="3" height="1" fill="#000"/>
<rect x="77" y="987" width="3" height="1" fill="#000"/>
<rect x="77" y="995" width="3" height="1" fill="#000"/>
<rect x="77" y="1003" width="3" height="1" fill="#000"/>
<rect x="65" y="1011" width="15" height="1" fill="#000"/>
<rect x="77" y="1019" width="3" height="1" fill="#000"/>
<rect x="66" y="109" width="1" height="1" fill="#111"/>
<rect x="68" y="109" width="1" height="1" fill="#111"/>
<rect x="70" y="109" width="1" height="1" fill="#111"/>
<rect x="72" y="109" width="1" height="1" fill="#111"/>
<rect x="74" y="109" width="1" height="1" fill="#111"/>
<rect x="76" y="109" width="1" height="1" fill="#111"/>
<rect x="78" y="109" width="1" height="1" fill="#111"/>
</svg>
<div class="t" style="left:67px;top:107.0px;font-size:8.8px;color:#111">0</div>
<div class="t" style="left:67px;top:178.5px;font-size:8.8px;color:#111">1</div>
<div class="t" style="left:67px;top:188.0px;font-size:8.8px;color:#111">0</div>
<div class="t" style="left:67px;top:259.5px;font-size:8.8px;color:#111">2</div>
<div class="t" style="left:67px;top:269.0px;font-size:8.8px;color:#111">0</div>
<div class="t" style="left:67px;top:341.5px;font-size:8.8px;color:#111">3</div>
<div class="t" style="left:67px;top:351.0px;font-size:8.8px;color:#111">0</div>
<div class="t" style="left:67px;top:422.5px;font-size:8.8px;color:#111">4</div>
<div class="t" style="left:67px;top:432.0px;font-size:8.8px;color:#111">0</div>
<div class="t" style="left:67px;top:503.5px;font-size:8.8px;color:#111">5</div>
<div class="t" style="left:67px;top:513.0px;font-size:8.8px;color:#111">0</div>
<div class="t" style="left:67px;top:584.5px;font-size:8.8px;color:#111">6</div>
<div class="t" style="left:67px;top:594.0px;font-size:8.8px;color:#111">0</div>
<div class="t" style="left:67px;top:665.5px;font-size:8.8px;color:#111">7</div>
<div class="t" style="left:67px;top:675.0px;font-size:8.8px;color:#111">0</div>
<div class="t" style="left:67px;top:746.5px;font-size:8.8px;color:#111">8</div>
<div class="t" style="left:67px;top:756.0px;font-size:8.8px;color:#111">0</div>
<div class="t" style="left:67px;top:827.5px;font-size:8.8px;color:#111">9</div>
<div class="t" style="left:67px;top:837.0px;font-size:8.8px;color:#111">0</div>
<div class="t" style="left:67px;top:899.0px;font-size:8.8px;color:#111">1</div>
<div class="t" style="left:67px;top:908.5px;font-size:8.8px;color:#111">0</div>
<div class="t" style="left:67px;top:918.0px;font-size:8.8px;color:#111">0</div>
<div class="t" style="left:67px;top:981.0px;font-size:8.8px;color:#111">1</div>
<div class="t" style="left:67px;top:990.5px;font-size:8.8px;color:#111">1</div>
<div class="t" style="left:67px;top:1000.0px;font-size:8.8px;color:#111">0</div>
<svg class="a" style="left:81px;top:105px" width="1604" height="915" viewBox="81 105 1604 915" shape-rendering="crispEdges">
<rect x="81" y="105" width="1604" height="915" fill="#f1f1f1"/>
<rect x="267" y="119" width="1233" height="884" fill="#ffffff"/>
<rect x="88" y="105" width="1" height="915" fill="#dfdfdf"/>
<rect x="104" y="105" width="1" height="915" fill="#dfdfdf"/>
<rect x="120" y="105" width="1" height="915" fill="#dfdfdf"/>
<rect x="136" y="105" width="1" height="915" fill="#dfdfdf"/>
<rect x="153" y="105" width="1" height="915" fill="#bababa"/>
<rect x="169" y="105" width="1" height="915" fill="#dfdfdf"/>
<rect x="185" y="105" width="1" height="915" fill="#dfdfdf"/>
<rect x="201" y="105" width="1" height="915" fill="#dfdfdf"/>
<rect x="218" y="105" width="1" height="915" fill="#dfdfdf"/>
<rect x="234" y="105" width="1" height="915" fill="#bababa"/>
<rect x="250" y="105" width="1" height="915" fill="#dfdfdf"/>
<rect x="266" y="105" width="1" height="915" fill="#dfdfdf"/>
<rect x="282" y="105" width="1" height="915" fill="#dfdfdf"/>
<rect x="299" y="105" width="1" height="915" fill="#dfdfdf"/>
<rect x="315" y="105" width="1" height="915" fill="#bababa"/>
<rect x="331" y="105" width="1" height="915" fill="#dfdfdf"/>
<rect x="347" y="105" width="1" height="915" fill="#dfdfdf"/>
<rect x="363" y="105" width="1" height="915" fill="#dfdfdf"/>
<rect x="380" y="105" width="1" height="915" fill="#dfdfdf"/>
<rect x="396" y="105" width="1" height="915" fill="#bababa"/>
<rect x="412" y="105" width="1" height="915" fill="#dfdfdf"/>
<rect x="428" y="105" width="1" height="915" fill="#dfdfdf"/>
<rect x="445" y="105" width="1" height="915" fill="#dfdfdf"/>
<rect x="461" y="105" width="1" height="915" fill="#dfdfdf"/>
<rect x="477" y="105" width="1" height="915" fill="#bababa"/>
<rect x="493" y="105" width="1" height="915" fill="#dfdfdf"/>
<rect x="509" y="105" width="1" height="915" fill="#dfdfdf"/>
<rect x="526" y="105" width="1" height="915" fill="#dfdfdf"/>
<rect x="542" y="105" width="1" height="915" fill="#dfdfdf"/>
<rect x="558" y="105" width="1" height="915" fill="#bababa"/>
<rect x="574" y="105" width="1" height="915" fill="#dfdfdf"/>
<rect x="591" y="105" width="1" height="915" fill="#dfdfdf"/>
<rect x="607" y="105" width="1" height="915" fill="#dfdfdf"/>
<rect x="623" y="105" width="1" height="915" fill="#dfdfdf"/>
<rect x="639" y="105" width="1" height="915" fill="#bababa"/>
<rect x="655" y="105" width="1" height="915" fill="#dfdfdf"/>
<rect x="672" y="105" width="1" height="915" fill="#dfdfdf"/>
<rect x="688" y="105" width="1" height="915" fill="#dfdfdf"/>
<rect x="704" y="105" width="1" height="915" fill="#dfdfdf"/>
<rect x="720" y="105" width="1" height="915" fill="#bababa"/>
<rect x="736" y="105" width="1" height="915" fill="#dfdfdf"/>
<rect x="753" y="105" width="1" height="915" fill="#dfdfdf"/>
<rect x="769" y="105" width="1" height="915" fill="#dfdfdf"/>
<rect x="785" y="105" width="1" height="915" fill="#dfdfdf"/>
<rect x="801" y="105" width="1" height="915" fill="#bababa"/>
<rect x="818" y="105" width="1" height="915" fill="#dfdfdf"/>
<rect x="834" y="105" width="1" height="915" fill="#dfdfdf"/>
<rect x="850" y="105" width="1" height="915" fill="#dfdfdf"/>
<rect x="866" y="105" width="1" height="915" fill="#dfdfdf"/>
<rect x="882" y="105" width="1" height="915" fill="#bababa"/>
<rect x="899" y="105" width="1" height="915" fill="#dfdfdf"/>
<rect x="915" y="105" width="1" height="915" fill="#dfdfdf"/>
<rect x="931" y="105" width="1" height="915" fill="#dfdfdf"/>
<rect x="947" y="105" width="1" height="915" fill="#dfdfdf"/>
<rect x="963" y="105" width="1" height="915" fill="#bababa"/>
<rect x="980" y="105" width="1" height="915" fill="#dfdfdf"/>
<rect x="996" y="105" width="1" height="915" fill="#dfdfdf"/>
<rect x="1012" y="105" width="1" height="915" fill="#dfdfdf"/>
<rect x="1028" y="105" width="1" height="915" fill="#dfdfdf"/>
<rect x="1045" y="105" width="1" height="915" fill="#bababa"/>
<rect x="1061" y="105" width="1" height="915" fill="#dfdfdf"/>
<rect x="1077" y="105" width="1" height="915" fill="#dfdfdf"/>
<rect x="1093" y="105" width="1" height="915" fill="#dfdfdf"/>
<rect x="1109" y="105" width="1" height="915" fill="#dfdfdf"/>
<rect x="1126" y="105" width="1" height="915" fill="#bababa"/>
<rect x="1142" y="105" width="1" height="915" fill="#dfdfdf"/>
<rect x="1158" y="105" width="1" height="915" fill="#dfdfdf"/>
<rect x="1174" y="105" width="1" height="915" fill="#dfdfdf"/>
<rect x="1190" y="105" width="1" height="915" fill="#dfdfdf"/>
<rect x="1207" y="105" width="1" height="915" fill="#bababa"/>
<rect x="1223" y="105" width="1" height="915" fill="#dfdfdf"/>
<rect x="1239" y="105" width="1" height="915" fill="#dfdfdf"/>
<rect x="1255" y="105" width="1" height="915" fill="#dfdfdf"/>
<rect x="1272" y="105" width="1" height="915" fill="#dfdfdf"/>
<rect x="1288" y="105" width="1" height="915" fill="#bababa"/>
<rect x="1304" y="105" width="1" height="915" fill="#dfdfdf"/>
<rect x="1320" y="105" width="1" height="915" fill="#dfdfdf"/>
<rect x="1336" y="105" width="1" height="915" fill="#dfdfdf"/>
<rect x="1353" y="105" width="1" height="915" fill="#dfdfdf"/>
<rect x="1369" y="105" width="1" height="915" fill="#bababa"/>
<rect x="1385" y="105" width="1" height="915" fill="#dfdfdf"/>
<rect x="1401" y="105" width="1" height="915" fill="#dfdfdf"/>
<rect x="1417" y="105" width="1" height="915" fill="#dfdfdf"/>
<rect x="1434" y="105" width="1" height="915" fill="#dfdfdf"/>
<rect x="1450" y="105" width="1" height="915" fill="#bababa"/>
<rect x="1466" y="105" width="1" height="915" fill="#dfdfdf"/>
<rect x="1482" y="105" width="1" height="915" fill="#dfdfdf"/>
<rect x="1499" y="105" width="1" height="915" fill="#dfdfdf"/>
<rect x="1515" y="105" width="1" height="915" fill="#dfdfdf"/>
<rect x="1531" y="105" width="1" height="915" fill="#bababa"/>
<rect x="1547" y="105" width="1" height="915" fill="#dfdfdf"/>
<rect x="1563" y="105" width="1" height="915" fill="#dfdfdf"/>
<rect x="1580" y="105" width="1" height="915" fill="#dfdfdf"/>
<rect x="1596" y="105" width="1" height="915" fill="#dfdfdf"/>
<rect x="1612" y="105" width="1" height="915" fill="#bababa"/>
<rect x="1628" y="105" width="1" height="915" fill="#dfdfdf"/>
<rect x="1644" y="105" width="1" height="915" fill="#dfdfdf"/>
<rect x="1661" y="105" width="1" height="915" fill="#dfdfdf"/>
<rect x="1677" y="105" width="1" height="915" fill="#dfdfdf"/>
<rect x="81" y="118" width="1604" height="1" fill="#bababa"/>
<rect x="81" y="135" width="1604" height="1" fill="#dfdfdf"/>
<rect x="81" y="151" width="1604" height="1" fill="#dfdfdf"/>
<rect x="81" y="167" width="1604" height="1" fill="#dfdfdf"/>
<rect x="81" y="183" width="1604" height="1" fill="#dfdfdf"/>
<rect x="81" y="199" width="1604" height="1" fill="#bababa"/>
<rect x="81" y="216" width="1604" height="1" fill="#dfdfdf"/>
<rect x="81" y="232" width="1604" height="1" fill="#dfdfdf"/>
<rect x="81" y="248" width="1604" height="1" fill="#dfdfdf"/>
<rect x="81" y="264" width="1604" height="1" fill="#dfdfdf"/>
<rect x="81" y="280" width="1604" height="1" fill="#bababa"/>
<rect x="81" y="297" width="1604" height="1" fill="#dfdfdf"/>
<rect x="81" y="313" width="1604" height="1" fill="#dfdfdf"/>
<rect x="81" y="329" width="1604" height="1" fill="#dfdfdf"/>
<rect x="81" y="345" width="1604" height="1" fill="#dfdfdf"/>
<rect x="81" y="362" width="1604" height="1" fill="#bababa"/>
<rect x="81" y="378" width="1604" height="1" fill="#dfdfdf"/>
<rect x="81" y="394" width="1604" height="1" fill="#dfdfdf"/>
<rect x="81" y="410" width="1604" height="1" fill="#dfdfdf"/>
<rect x="81" y="426" width="1604" height="1" fill="#dfdfdf"/>
<rect x="81" y="443" width="1604" height="1" fill="#bababa"/>
<rect x="81" y="459" width="1604" height="1" fill="#dfdfdf"/>
<rect x="81" y="475" width="1604" height="1" fill="#dfdfdf"/>
<rect x="81" y="491" width="1604" height="1" fill="#dfdfdf"/>
<rect x="81" y="507" width="1604" height="1" fill="#dfdfdf"/>
<rect x="81" y="524" width="1604" height="1" fill="#bababa"/>
<rect x="81" y="540" width="1604" height="1" fill="#dfdfdf"/>
<rect x="81" y="556" width="1604" height="1" fill="#dfdfdf"/>
<rect x="81" y="572" width="1604" height="1" fill="#dfdfdf"/>
<rect x="81" y="589" width="1604" height="1" fill="#dfdfdf"/>
<rect x="81" y="605" width="1604" height="1" fill="#bababa"/>
<rect x="81" y="621" width="1604" height="1" fill="#dfdfdf"/>
<rect x="81" y="637" width="1604" height="1" fill="#dfdfdf"/>
<rect x="81" y="653" width="1604" height="1" fill="#dfdfdf"/>
<rect x="81" y="670" width="1604" height="1" fill="#dfdfdf"/>
<rect x="81" y="686" width="1604" height="1" fill="#bababa"/>
<rect x="81" y="702" width="1604" height="1" fill="#dfdfdf"/>
<rect x="81" y="718" width="1604" height="1" fill="#dfdfdf"/>
<rect x="81" y="734" width="1604" height="1" fill="#dfdfdf"/>
<rect x="81" y="751" width="1604" height="1" fill="#dfdfdf"/>
<rect x="81" y="767" width="1604" height="1" fill="#bababa"/>
<rect x="81" y="783" width="1604" height="1" fill="#dfdfdf"/>
<rect x="81" y="799" width="1604" height="1" fill="#dfdfdf"/>
<rect x="81" y="815" width="1604" height="1" fill="#dfdfdf"/>
<rect x="81" y="832" width="1604" height="1" fill="#dfdfdf"/>
<rect x="81" y="848" width="1604" height="1" fill="#bababa"/>
<rect x="81" y="864" width="1604" height="1" fill="#dfdfdf"/>
<rect x="81" y="880" width="1604" height="1" fill="#dfdfdf"/>
<rect x="81" y="897" width="1604" height="1" fill="#dfdfdf"/>
<rect x="81" y="913" width="1604" height="1" fill="#dfdfdf"/>
<rect x="81" y="929" width="1604" height="1" fill="#bababa"/>
<rect x="81" y="945" width="1604" height="1" fill="#dfdfdf"/>
<rect x="81" y="961" width="1604" height="1" fill="#dfdfdf"/>
<rect x="81" y="978" width="1604" height="1" fill="#dfdfdf"/>
<rect x="81" y="994" width="1604" height="1" fill="#dfdfdf"/>
<rect x="81" y="1010" width="1604" height="1" fill="#bababa"/>
<rect x="308.5" y="161.5" width="1149" height="799" fill="none" stroke="#95a095" stroke-width="1"/>
<rect x="309" y="960" width="1149" height="1" fill="#8cb88c"/>
<rect x="269" y="1004" width="1232" height="1" fill="#c4c4c4"/>
<rect x="1500" y="121" width="1" height="884" fill="#c4c4c4"/>
<rect x="267" y="119" width="1233" height="1" fill="#000"/><rect x="267" y="1003" width="1233" height="1" fill="#000"/>
<rect x="267" y="119" width="1" height="885" fill="#000"/><rect x="1499" y="119" width="1" height="885" fill="#000"/>
</svg>
<svg class="a" style="left:81px;top:105px" width="1604" height="915" viewBox="81 105 1604 915">
<circle cx="364" cy="362" r="146" fill="none" stroke="#000" stroke-width="2.2"/>
<circle cx="364" cy="362" r="130" fill="none" stroke="#000" stroke-width="2.8"/>
<rect x="492.7" y="362" width="2.7" height="405" fill="#000"/>
<rect x="508.7" y="362" width="2.7" height="405" fill="#000"/>
<rect x="524.9000000000001" y="362" width="2.7" height="405" fill="#000"/>
<rect x="541.1" y="362" width="2.7" height="405" fill="#000"/>
<rect x="557.3000000000001" y="362" width="2.7" height="405" fill="#000"/>
<circle cx="364" cy="362" r="146" fill="none" stroke="#4b3cc0" stroke-width="1"/>
<rect x="218.5" y="216.5" width="292" height="292" fill="none" stroke="#5b3fb8" stroke-width="1"/>
<rect x="216.5" y="214.5" width="4" height="4" fill="#fff" stroke="#5b3fb8" stroke-width="1"/>
<rect x="216.5" y="360.5" width="4" height="4" fill="#fff" stroke="#5b3fb8" stroke-width="1"/>
<rect x="216.5" y="506.5" width="4" height="4" fill="#fff" stroke="#5b3fb8" stroke-width="1"/>
<rect x="362.5" y="214.5" width="4" height="4" fill="#fff" stroke="#5b3fb8" stroke-width="1"/>
<rect x="362" y="360" width="4" height="4" fill="#5a4ad0"/>
<rect x="362.5" y="506.5" width="4" height="4" fill="#fff" stroke="#5b3fb8" stroke-width="1"/>
<rect x="508.5" y="214.5" width="4" height="4" fill="#fff" stroke="#5b3fb8" stroke-width="1"/>
<rect x="508.5" y="360.5" width="4" height="4" fill="#fff" stroke="#5b3fb8" stroke-width="1"/>
<rect x="508.5" y="506.5" width="4" height="4" fill="#fff" stroke="#5b3fb8" stroke-width="1"/>
</svg>
<div class="a" style="left:65px;top:1019px;width:1635px;height:16px;background:#efefef"></div>
<div class="a" style="left:65px;top:1019px;width:360px;height:16px;background:#d2d2d2"></div>
<div class="a" style="left:66px;top:1020px;width:58px;height:15px;background:#fff"></div>
<div class="t" style="left:71px;top:1023.60px;font-size:10px;color:#111;font-weight:normal;">286%</div>
<svg class="a" style="left:113px;top:1028px" width="7" height="5"><path d="M0 0 L7 0 L3.5 4.5 Z" fill="#111"/></svg>
<div class="a" style="left:157px;top:1020px;width:44px;height:15px;background:#fff"></div>
<div class="t" style="left:164px;top:1023.60px;font-size:10px;color:#111;font-weight:normal;">1</div>
<svg class="a" style="left:190px;top:1028px" width="7" height="5"><path d="M0 0 L7 0 L3.5 4.5 Z" fill="#111"/></svg>
<svg class="a" style="left:128px;top:1022px" width="102" height="10"><path d="M1.5 1 V9" stroke="#888" stroke-width="1.2"/><path d="M7.5 1 L2.5 5 L7.5 9 Z" fill="#999"/><path d="M23 1 L19 5 L23 9 Z" fill="#999"/><path d="M80 1 L84 5 L80 9 Z" fill="#999"/><path d="M94 1 L99 5 L94 9 Z" fill="#999"/><path d="M100.5 1 V9" stroke="#888" stroke-width="1.2"/></svg>
<div class="a" style="left:233px;top:1020px;width:181px;height:15px;background:linear-gradient(#e2e2e2,#cfcfcf);border:1px solid #f4f4f4"></div>
<div class="t" style="left:308px;top:1023.60px;font-size:10px;color:#1a1a1a;font-weight:normal;">Auswahl</div>
<svg class="a" style="left:404px;top:1022px" width="6" height="10"><path d="M0 0 L5.5 5 L0 10 Z" fill="#111"/></svg>
<svg class="a" style="left:420px;top:1023px" width="5" height="8"><path d="M4.5 0 L0 4 L4.5 8 Z" fill="#555"/></svg>
<svg class="a" style="left:1673px;top:1023px" width="5" height="8"><path d="M0 0 L4.5 4 L0 8 Z" fill="#333"/></svg>
<div class="a" style="left:1041px;top:1020px;width:15px;height:14px;background:linear-gradient(#f8f8f8,#c8c8c8);border:1px solid #8a8a8a;border-radius:2px"></div>
<div class="a" style="left:1685px;top:105px;width:15px;height:915px;background:linear-gradient(90deg,#eeeeee,#f6f6f6)"></div>
<svg class="a" style="left:1688px;top:95px" width="10" height="6"><path d="M0 5 L5 0 L10 5 Z" fill="#444"/></svg>
<svg class="a" style="left:1687px;top:1007px" width="10" height="6"><path d="M0 0 L5 5 L10 0 Z" fill="#555"/></svg>
<div class="a" style="left:1685px;top:546px;width:14px;height:15px;background:linear-gradient(135deg,#ffffff,#d0d0d0);border:1px solid #8a8a8a;border-radius:2px"></div>
<div class="a" style="left:1700px;top:68px;width:1px;height:967px;background:#222"></div>
<div class="a" style="left:1701px;top:68px;width:215px;height:967px;background:#d6d6d6;border-right:1px solid #3a3a3a"></div>
<div class="a" style="left:1916px;top:68px;width:4px;height:967px;background:#dedede"></div>
<div class="a" style="left:1918px;top:0px;width:1px;height:1035px;background:#f4f4f4"></div>
<div class="a" style="left:1919px;top:0px;width:1px;height:1035px;background:#7a7a7a"></div>
<div class="a" style="left:1701px;top:68px;width:215px;height:13px;background:linear-gradient(#606060,#3c3c3c);border-bottom:1px solid #111"></div>
<svg class="a" style="left:1902px;top:71px" width="12" height="8"><path d="M0 0 L5 4 L0 8 Z M6 0 L11 4 L6 8 Z" fill="#ddd"/></svg>
<div class="a" style="left:1701px;top:81px;width:214px;height:17px;background:linear-gradient(#9c9c9c,#8a8a8a)"></div>
<div class="a" style="left:1701px;top:81px;width:49px;height:18px;background:linear-gradient(#ececec,#d8d8d8)"></div>
<div class="t" style="left:1713.5px;top:84.86px;font-size:10.3px;color:#2a2a2a;font-weight:normal;font-weight:normal;-webkit-text-stroke:0.25px #2a2a2a">Farbe</div>
<svg class="a" style="left:1705px;top:86px" width="6" height="9"><path d="M0.5 3.5 L3 1 L5.5 3.5 M0.5 5.5 L3 8 L5.5 5.5" fill="none" stroke="#222" stroke-width="1.1"/></svg>
<div class="a" style="left:1750px;top:81px;width:61px;height:17px;background:linear-gradient(#a4a4a4,#8e8e8e);border-right:1px solid #7a7a7a"></div>
<div class="t" style="left:1757px;top:84.86px;font-size:10.3px;color:#2e2e2e;font-weight:normal;font-weight:normal;-webkit-text-stroke:0.25px #2a2a2a">Farbfelder</div>
<div class="a" style="left:1811px;top:81px;width:57px;height:17px;background:linear-gradient(#a4a4a4,#8e8e8e);border-right:1px solid #7a7a7a"></div>
<div class="t" style="left:1819px;top:84.86px;font-size:10.3px;color:#2e2e2e;font-weight:normal;font-weight:normal;-webkit-text-stroke:0.25px #2a2a2a">Farbhilfe</div>
<svg class="a" style="left:1897px;top:86px" width="15" height="10"><path d="M0 3 L4 3 L2 5.5 Z" fill="#222"/><rect x="5" y="0.5" width="10" height="1.2" fill="#222"/><rect x="5" y="4" width="10" height="1.2" fill="#222"/><rect x="5" y="7.5" width="10" height="1.2" fill="#222"/></svg>
<svg class="a" style="left:1701px;top:98px" width="214" height="101" viewBox="1701 98 214 101"><defs><linearGradient id="kC" x1="0" x2="1"><stop offset="0" stop-color="#111"/><stop offset="1" stop-color="#082848"/></linearGradient><linearGradient id="kM" x1="0" x2="1"><stop offset="0" stop-color="#111"/><stop offset="1" stop-color="#300818"/></linearGradient><linearGradient id="kY" x1="0" x2="1"><stop offset="0" stop-color="#111"/><stop offset="1" stop-color="#202410"/></linearGradient><linearGradient id="kK" x1="0" x2="1"><stop offset="0" stop-color="#fff"/><stop offset="1" stop-color="#111"/></linearGradient><linearGradient id="hue" x1="0" x2="1"><stop offset="0" stop-color="#e0201a"/><stop offset="0.17" stop-color="#f0e020"/><stop offset="0.37" stop-color="#30b030"/><stop offset="0.55" stop-color="#40b8e8"/><stop offset="0.72" stop-color="#3030a0"/><stop offset="0.88" stop-color="#c02080"/><stop offset="1" stop-color="#e01838"/></linearGradient><linearGradient id="dark" x1="0" x2="0" y1="0" y2="1"><stop offset="0" stop-color="#fff" stop-opacity="0.35"/><stop offset="0.45" stop-color="#000" stop-opacity="0"/><stop offset="1" stop-color="#000" stop-opacity="0.85"/></linearGradient></defs><rect x="1705.5" y="105.5" width="18" height="18" fill="#fff" stroke="#111"/><path d="M1706 123 L1723 106" stroke="#c0103a" stroke-width="2"/><rect x="1714" y="114" width="20" height="20" fill="#000"/><rect x="1720" y="120" width="8" height="8" fill="#d8d8d8"/><path d="M1706.5 141 L1711.5 138.5 L1716.5 141 L1716.5 147.5 L1711.5 150 L1706.5 147.5 Z M1706.5 141 L1711.5 143.5 L1716.5 141 M1711.5 143.5 V150" fill="#eee" stroke="#222" stroke-width="1"/><rect x="1721.5" y="138.5" width="12" height="12" fill="#3a3e3e" stroke="#111"/><rect x="1757" y="105.5" width="101" height="6.5" fill="url(#kC)" stroke="#111" stroke-width="0.8"/><rect x="1864" y="101.0" width="33" height="16" fill="#fff"/><path d="M1752.5 118.0 L1757 113.5 L1761.5 118.0 Z" fill="#f0f0f0" stroke="#777" stroke-width="0.9"/><rect x="1757" y="123.5" width="101" height="6.5" fill="url(#kM)" stroke="#111" stroke-width="0.8"/><rect x="1864" y="119.0" width="33" height="16" fill="#fff"/><path d="M1752.5 136.0 L1757 131.5 L1761.5 136.0 Z" fill="#f0f0f0" stroke="#777" stroke-width="0.9"/><rect x="1757" y="141.5" width="101" height="6.5" fill="url(#kY)" stroke="#111" stroke-width="0.8"/><rect x="1864" y="137.0" width="33" height="16" fill="#fff"/><path d="M1752.5 154.0 L1757 149.5 L1761.5 154.0 Z" fill="#f0f0f0" stroke="#777" stroke-width="0.9"/><rect x="1757" y="159.5" width="101" height="6.5" fill="url(#kK)" stroke="#111" stroke-width="0.8"/><rect x="1864" y="155.0" width="33" height="16" fill="#fff"/><path d="M1852.5 172.0 L1857 167.5 L1861.5 172.0 Z" fill="#f0f0f0" stroke="#777" stroke-width="0.9"/><rect x="1706.5" y="174.5" width="199" height="16" fill="#000"/><rect x="1707" y="175" width="15" height="15" fill="#fff"/><path d="M1707 190 L1722 175" stroke="#c0103a" stroke-width="1.8"/><rect x="1723" y="175" width="167" height="15" fill="url(#hue)"/><rect x="1723" y="175" width="167" height="15" fill="url(#dark)"/><rect x="1890" y="175" width="15" height="7" fill="#f4f4f4"/><rect x="1890" y="182" width="15" height="8" fill="#000"/></svg>
<div class="t" style="left:1744.5px;top:104.50px;font-size:10.5px;color:#222;font-weight:normal;">C</div>
<div class="t" style="left:1869px;top:104.90px;font-size:10px;color:#111;font-weight:normal;">0</div>
<div class="t" style="left:1900px;top:104.90px;font-size:10px;color:#222;font-weight:normal;">%</div>
<div class="t" style="left:1744.5px;top:122.51px;font-size:10.5px;color:#222;font-weight:normal;">M</div>
<div class="t" style="left:1869px;top:122.90px;font-size:10px;color:#111;font-weight:normal;">0</div>
<div class="t" style="left:1900px;top:122.90px;font-size:10px;color:#222;font-weight:normal;">%</div>
<div class="t" style="left:1744.5px;top:140.51px;font-size:10.5px;color:#222;font-weight:normal;">Y</div>
<div class="t" style="left:1869px;top:140.90px;font-size:10px;color:#111;font-weight:normal;">0</div>
<div class="t" style="left:1900px;top:140.90px;font-size:10px;color:#222;font-weight:normal;">%</div>
<div class="t" style="left:1744.5px;top:158.51px;font-size:10.5px;color:#222;font-weight:normal;">K</div>
<div class="t" style="left:1869px;top:158.90px;font-size:10px;color:#111;font-weight:normal;">100</div>
<div class="t" style="left:1900px;top:158.90px;font-size:10px;color:#222;font-weight:normal;">%</div>
<div class="a" style="left:1701px;top:199px;width:214px;height:3px;background:#333"></div>
<div class="a" style="left:1701px;top:202px;width:214px;height:16px;background:linear-gradient(#9c9c9c,#8a8a8a)"></div>
<div class="a" style="left:1701px;top:202px;width:42px;height:16px;background:linear-gradient(#a4a4a4,#8e8e8e);border-right:1px solid #7a7a7a"></div>
<div class="t" style="left:1708.5px;top:205.86px;font-size:10.3px;color:#2e2e2e;font-weight:normal;font-weight:normal;-webkit-text-stroke:0.25px #2a2a2a">Pinsel</div>
<div class="a" style="left:1743px;top:202px;width:55px;height:17px;background:linear-gradient(#ececec,#d8d8d8)"></div>
<div class="t" style="left:1750px;top:205.86px;font-size:10.3px;color:#2a2a2a;font-weight:normal;font-weight:normal;-webkit-text-stroke:0.25px #2a2a2a">Symbole</div>
<div class="a" style="left:1798px;top:202px;width:64px;height:16px;background:linear-gradient(#a4a4a4,#8e8e8e);border-right:1px solid #7a7a7a"></div>
<div class="t" style="left:1805px;top:205.86px;font-size:10.3px;color:#2e2e2e;font-weight:normal;font-weight:normal;-webkit-text-stroke:0.25px #2a2a2a">Grafikstile</div>
<svg class="a" style="left:1897px;top:207px" width="15" height="10"><path d="M0 3 L4 3 L2 5.5 Z" fill="#222"/><rect x="5" y="0.5" width="10" height="1.2" fill="#222"/><rect x="5" y="4" width="10" height="1.2" fill="#222"/><rect x="5" y="7.5" width="10" height="1.2" fill="#222"/></svg>
<div class="a" style="left:1703px;top:220px;width:195px;height:197px;background:#d8d8d8;border-top:2px solid #111;border-bottom:1px solid #111"></div>
<div class="a" style="left:1898px;top:220px;width:15px;height:197px;background:linear-gradient(90deg,#e8e8e8,#f2f2f2)"></div>
<svg class="a" style="left:1901px;top:227px" width="10" height="6"><path d="M0 5 L5 0 L10 5 Z" fill="#888"/></svg>
<svg class="a" style="left:1901px;top:406px" width="10" height="6"><path d="M0 0 L5 5 L10 0 Z" fill="#888"/></svg>
<svg class="a" style="left:1701px;top:417px" width="214" height="18" viewBox="1701 417 214 18"><rect x="1713.5" y="421.5" width="8" height="8" fill="#ddd" stroke="#444"/><rect x="1716.5" y="423.5" width="8" height="8" fill="#ccc" stroke="#444"/><path d="M1728 431 h2 v-2 Z" fill="#111"/><path d="M1751 421 L1757 425 L1754 427 L1760 429" fill="none" stroke="#444" stroke-width="2"/><path d="M1778 426 H1798 M1782 423 Q1788 426 1782 429 M1794 423 Q1788 426 1794 429" fill="none" stroke="#777" stroke-width="1.3"/><rect x="1814.5" y="420.5" width="12" height="9" fill="#e4e4e4" stroke="#999"/><path d="M1817 425 h7" stroke="#999"/><rect x="1848.5" y="421.5" width="9" height="9" fill="#fff" stroke="#222"/><rect x="1849" y="425" width="5" height="5" fill="#222"/><path d="M1880.5 423.5 h8 l-1 8 h-6 Z M1879 422 h11 M1882 420.5 h5" fill="#eee" stroke="#444"/><rect x="1904" y="431" width="1" height="1" fill="#777"/><rect x="1907" y="428" width="1" height="1" fill="#777"/><rect x="1907" y="431" width="1" height="1" fill="#777"/><rect x="1910" y="425" width="1" height="1" fill="#777"/><rect x="1910" y="428" width="1" height="1" fill="#777"/><rect x="1910" y="431" width="1" height="1" fill="#777"/></svg>
<div class="a" style="left:1701px;top:435px;width:214px;height:3px;background:#333"></div>
<div class="a" style="left:1701px;top:438px;width:214px;height:17px;background:linear-gradient(#9c9c9c,#8a8a8a)"></div>
<div class="a" style="left:1701px;top:438px;width:47px;height:18px;background:linear-gradient(#ececec,#d8d8d8)"></div>
<div class="t" style="left:1708.5px;top:441.86px;font-size:10.3px;color:#2a2a2a;font-weight:normal;font-weight:normal;-webkit-text-stroke:0.25px #2a2a2a">Ebenen</div>
<div class="a" style="left:1748px;top:438px;width:50px;height:17px;background:linear-gradient(#a4a4a4,#8e8e8e);border-right:1px solid #7a7a7a"></div>
<div class="t" style="left:1755.5px;top:441.86px;font-size:10.3px;color:#2e2e2e;font-weight:normal;font-weight:normal;-webkit-text-stroke:0.25px #2a2a2a">Zeichen</div>
<div class="a" style="left:1798px;top:438px;width:46px;height:17px;background:linear-gradient(#a4a4a4,#8e8e8e);border-right:1px solid #7a7a7a"></div>
<div class="t" style="left:1806px;top:441.86px;font-size:10.3px;color:#2e2e2e;font-weight:normal;font-weight:normal;-webkit-text-stroke:0.25px #2a2a2a">Absatz</div>
<svg class="a" style="left:1897px;top:443px" width="15" height="10"><path d="M0 3 L4 3 L2 5.5 Z" fill="#222"/><rect x="5" y="0.5" width="10" height="1.2" fill="#222"/><rect x="5" y="4" width="10" height="1.2" fill="#222"/><rect x="5" y="7.5" width="10" height="1.2" fill="#222"/></svg>
<div class="a" style="left:1703px;top:456px;width:195px;height:197px;background:#d8d8d8;border-top:1px solid #111;border-bottom:1px solid #111"></div>
<div class="a" style="left:1897px;top:456px;width:16px;height:197px;background:linear-gradient(90deg,#e6e6e6,#f0f0f0)"></div>
<svg class="a" style="left:1901px;top:465px" width="10" height="6"><path d="M0 5 L5 0 L10 5 Z" fill="#999"/></svg>
<svg class="a" style="left:1900px;top:641px" width="10" height="6"><path d="M0 0 L5 5 L10 0 Z" fill="#999"/></svg>
<svg class="a" style="left:1703px;top:457px" width="194" height="61" viewBox="1703 457 194 61"><rect x="1703" y="457" width="194" height="20" fill="#d4d4d4"/><rect x="1703" y="476" width="194" height="1" fill="#eeeeee"/><rect x="1707.5" y="459.5" width="12" height="14" fill="#d0d0d0" stroke="#f0f0f0"/><rect x="1723.5" y="459.5" width="12" height="14" fill="#d0d0d0" stroke="#f0f0f0"/><rect x="1739" y="460" width="4" height="14" fill="#5a5af0"/><path d="M1708 467 Q1713.5 461 1719 467 Q1713.5 472 1708 467 Z" fill="#fff" stroke="#111" stroke-width="1.3"/><circle cx="1713.5" cy="467" r="2.6" fill="#111"/><path d="M1752.5 462.5 L1757.5 467 L1752.5 471.5 Z" fill="#f4f4f8" stroke="#8a94a8" stroke-width="1"/><rect x="1703" y="477" width="194" height="20" fill="#d4d4d4"/><rect x="1703" y="496" width="194" height="1" fill="#eeeeee"/><rect x="1707.5" y="479.5" width="12" height="14" fill="#d0d0d0" stroke="#f0f0f0"/><rect x="1723.5" y="479.5" width="12" height="14" fill="#d0d0d0" stroke="#f0f0f0"/><rect x="1739" y="480" width="4" height="14" fill="#50e050"/><path d="M1708 487 Q1713.5 481 1719 487 Q1713.5 492 1708 487 Z" fill="#fff" stroke="#111" stroke-width="1.3"/><circle cx="1713.5" cy="487" r="2.6" fill="#111"/><path d="M1727 486 V483 Q1729.5 479 1732 483 V486" fill="none" stroke="#111" stroke-width="1.4"/><rect x="1725.5" y="486" width="8" height="6" fill="#222"/><path d="M1752.5 482.5 L1757.5 487 L1752.5 491.5 Z" fill="#f4f4f8" stroke="#8a94a8" stroke-width="1"/><rect x="1703" y="497" width="194" height="20" fill="#d4d4d4"/><rect x="1703" y="516" width="194" height="1" fill="#eeeeee"/><rect x="1707.5" y="499.5" width="12" height="14" fill="#d0d0d0" stroke="#f0f0f0"/><rect x="1723.5" y="499.5" width="12" height="14" fill="#d0d0d0" stroke="#f0f0f0"/><rect x="1739" y="500" width="4" height="14" fill="#f07828"/><path d="M1752.5 502.5 L1757.5 507 L1752.5 511.5 Z" fill="#f4f4f8" stroke="#8a94a8" stroke-width="1"/><rect x="1747" y="457" width="1" height="60" fill="#111"/><rect x="1763" y="457" width="134" height="20" fill="#3a8ef2"/><path d="M1891 457 H1897 V463 Z" fill="#111"/><rect x="1765.5" y="459.5" width="15" height="14" fill="#fff" stroke="#111" stroke-width="1.2"/><circle cx="1878.5" cy="467" r="4" fill="none" stroke="#222" stroke-width="1"/><rect x="1765.5" y="479.5" width="15" height="14" fill="#fff" stroke="#111" stroke-width="1.2"/><circle cx="1878.5" cy="487" r="4" fill="none" stroke="#222" stroke-width="1"/><rect x="1765.5" y="499.5" width="15" height="14" fill="#fff" stroke="#111" stroke-width="1.2"/><circle cx="1878.5" cy="507" r="4" fill="none" stroke="#222" stroke-width="1"/><circle cx="1769" cy="462" r="2.5" fill="none" stroke="#999"/><path d="M1771 464 V473" stroke="#999"/><rect x="1889" y="464" width="5" height="5" fill="#4a4af0"/><rect x="1703" y="516" width="194" height="1" fill="#111"/></svg>
<div class="t" style="left:1785px;top:462.94px;font-size:10.2px;color:#fff;font-weight:bold;">Meine Ebene</div>
<div class="t" style="left:1785px;top:483.10px;font-size:10px;color:#111;font-weight:normal;">Textbereich ausbl...</div>
<div class="t" style="left:1786px;top:503.10px;font-size:10px;color:#111;font-weight:normal;">Anschnitt/Falzlini...</div>
<div class="t" style="left:1712px;top:655.60px;font-size:10px;color:#111;font-weight:normal;">3 Ebenen</div>
<svg class="a" style="left:1701px;top:653px" width="214" height="17" viewBox="1701 653 214 17"><rect x="1782.5" y="655.5" width="8" height="8" fill="none" stroke="#777" stroke-dasharray="1 1"/><circle cx="1790" cy="661" r="4.5" fill="#fff" stroke="#222" stroke-width="1.3"/><path d="M1790 661 V657 A4 4 0 0 0 1786 661 Z" fill="#222"/><path d="M1811 659 h6 M1815 657 l2 2 l-2 2" fill="none" stroke="#222" stroke-width="1.2"/><rect x="1819.5" y="656.5" width="7" height="9" fill="#fff" stroke="#222"/><rect x="1820" y="661" width="4" height="4" fill="#222"/><rect x="1846.5" y="656.5" width="9" height="10" fill="#fff" stroke="#222"/><rect x="1847" y="661" width="5" height="5" fill="#222"/><path d="M1878.5 658.5 h8 l-1 9 h-6 Z M1877 657 h11 M1880 655.5 h5" fill="#eee" stroke="#444"/><rect x="1904" y="666" width="1" height="1" fill="#777"/><rect x="1907" y="663" width="1" height="1" fill="#777"/><rect x="1907" y="666" width="1" height="1" fill="#777"/><rect x="1910" y="660" width="1" height="1" fill="#777"/><rect x="1910" y="663" width="1" height="1" fill="#777"/><rect x="1910" y="666" width="1" height="1" fill="#777"/></svg>
<div class="a" style="left:1701px;top:670px;width:214px;height:3px;background:#333"></div>
<div class="a" style="left:1701px;top:673px;width:214px;height:17px;background:linear-gradient(#9c9c9c,#8a8a8a)"></div>
<div class="a" style="left:1701px;top:673px;width:59px;height:18px;background:linear-gradient(#ececec,#d8d8d8)"></div>
<div class="t" style="left:1713px;top:676.86px;font-size:10.3px;color:#2a2a2a;font-weight:normal;font-weight:normal;-webkit-text-stroke:0.25px #2a2a2a">Verlauf</div>
<svg class="a" style="left:1705px;top:678px" width="6" height="9"><path d="M0.5 3.5 L3 1 L5.5 3.5 M0.5 5.5 L3 8 L5.5 5.5" fill="none" stroke="#222" stroke-width="1.1"/></svg>
<div class="a" style="left:1760px;top:673px;width:70px;height:17px;background:linear-gradient(#a4a4a4,#8e8e8e);border-right:1px solid #7a7a7a"></div>
<div class="t" style="left:1767px;top:676.86px;font-size:10.3px;color:#2e2e2e;font-weight:normal;font-weight:normal;-webkit-text-stroke:0.25px #2a2a2a">Transparenz</div>
<svg class="a" style="left:1897px;top:678px" width="15" height="10"><path d="M0 3 L4 3 L2 5.5 Z" fill="#222"/><rect x="5" y="0.5" width="10" height="1.2" fill="#222"/><rect x="5" y="4" width="10" height="1.2" fill="#222"/><rect x="5" y="7.5" width="10" height="1.2" fill="#222"/></svg>
<svg class="a" style="left:1701px;top:690px" width="214" height="244" viewBox="1701 690 214 244"><defs><linearGradient id="gw" x1="0" x2="1"><stop offset="0" stop-color="#fff"/><stop offset="0.08" stop-color="#f6f6f6"/><stop offset="1" stop-color="#0a0a0a"/></linearGradient></defs><rect x="1709.5" y="696.5" width="27" height="27" fill="url(#gw)" stroke="#111" stroke-width="1.2"/><rect x="1739.5" y="695.5" width="8" height="29" fill="#e4e4e4" stroke="#999"/><path d="M1740.5 708 h6 l-3 3.5 Z" fill="#111"/><rect x="1771" y="699" width="122" height="18" fill="#fff" stroke="#e8e8e8"/><rect x="1874" y="700" width="18" height="16" fill="#fafafa"/><path d="M1880 707 h8 l-4 4 Z" fill="#111"/><rect x="1716" y="733" width="5" height="4" fill="#888"/><path d="M1723 735 h5 v4 M1726 738 l2 2 l2 -2" fill="none" stroke="#888" stroke-width="1.2"/><rect x="1723" y="742" width="6" height="5" fill="#888"/><path d="M1720 745 h-4 v-4 M1714 742 l2 -2 l2 2" fill="none" stroke="#888" stroke-width="1.2"/><path d="M1755 744.5 H1764 L1762 737 Z" fill="none" stroke="#333" stroke-width="1"/><rect x="1769.5" y="730.5" width="44" height="18" fill="#d8d8d8" stroke="#bcbcbc"/><rect x="1797" y="731" width="16" height="17" fill="#e2e2e2"/><path d="M1804 736 l3.5 3.5 l-3.5 3.5 Z" fill="#888"/><circle cx="1819" cy="733" r="1.4" fill="none" stroke="#999"/><path d="M1828 734 V748 M1826 736 l2 -2 l2 2 M1826 746 l2 2 l2 -2" fill="none" stroke="#222" stroke-width="1.2"/><ellipse cx="1836" cy="740" rx="5.5" ry="3.8" fill="#ddd" stroke="#333"/><path d="M1830 748 h12" stroke="#555" stroke-dasharray="1 1"/><rect x="1845.5" y="731.5" width="47" height="16" fill="#d8d8d8" stroke="#bcbcbc"/><rect x="1711" y="761" width="166" height="89" fill="#000"/><rect x="1712.5" y="762.5" width="163" height="86" fill="url(#gw)"/><path d="M1885.5 766.5 h7 l-1 8 h-5 Z M1884 765 h10 M1887 763.5 h4 M1888 768 v5 M1890 768 v5" fill="#e8e8e8" stroke="#888"/><rect x="1769.5" y="874.5" width="44" height="19" fill="#d8d8d8" stroke="#bcbcbc"/><rect x="1797" y="875" width="16" height="18" fill="#ececec"/><path d="M1804 880 l3.5 3.5 l-3.5 3.5 Z" fill="#777"/><rect x="1769.5" y="898.5" width="44" height="19" fill="#d8d8d8" stroke="#bcbcbc"/><rect x="1797" y="899" width="16" height="18" fill="#ececec"/><path d="M1804 904 l3.5 3.5 l-3.5 3.5 Z" fill="#777"/></svg>
<div class="t" style="left:1752px;top:702.21px;font-size:10.5px;color:#111;font-weight:normal;">Art:</div>
<div class="t" style="left:1893px;top:735.10px;font-size:10px;color:#aaa;font-weight:normal;">%</div>
<div class="t" style="left:1718px;top:879.60px;font-size:10px;color:#a4a4a4;font-weight:normal;text-shadow:0 1px 0 #f4f4f4">Deckkraft:</div>
<div class="t" style="left:1816px;top:879.60px;font-size:10px;color:#a4a4a4;font-weight:normal;">%</div>
<div class="t" style="left:1727px;top:903.60px;font-size:10px;color:#a4a4a4;font-weight:normal;text-shadow:0 1px 0 #f4f4f4">Position:</div>
<div class="t" style="left:1816px;top:903.60px;font-size:10px;color:#a4a4a4;font-weight:normal;">%</div>
<div class="a" style="left:1701px;top:934px;width:214px;height:3px;background:#333"></div>
<div class="a" style="left:1701px;top:937px;width:214px;height:17px;background:linear-gradient(#9c9c9c,#8a8a8a)"></div>
<div class="a" style="left:1701px;top:937px;width:55px;height:17px;background:linear-gradient(#a4a4a4,#8e8e8e);border-right:1px solid #7a7a7a"></div>
<div class="t" style="left:1708.5px;top:940.86px;font-size:10.3px;color:#2e2e2e;font-weight:normal;font-weight:normal;-webkit-text-stroke:0.25px #2a2a2a">Aussehen</div>
<div class="a" style="left:1756px;top:937px;width:61px;height:17px;background:linear-gradient(#a4a4a4,#8e8e8e);border-right:1px solid #7a7a7a"></div>
<div class="t" style="left:1763px;top:940.86px;font-size:10.3px;color:#2e2e2e;font-weight:normal;font-weight:normal;-webkit-text-stroke:0.25px #2a2a2a">Ausrichten</div>
<div class="a" style="left:1817px;top:937px;width:58px;height:18px;background:linear-gradient(#ececec,#d8d8d8)"></div>
<div class="t" style="left:1823px;top:940.86px;font-size:10.3px;color:#2a2a2a;font-weight:normal;font-weight:normal;-webkit-text-stroke:0.25px #2a2a2a">Pathfinder</div>
<svg class="a" style="left:1897px;top:942px" width="15" height="10"><path d="M0 3 L4 3 L2 5.5 Z" fill="#222"/><rect x="5" y="0.5" width="10" height="1.2" fill="#222"/><rect x="5" y="4" width="10" height="1.2" fill="#222"/><rect x="5" y="7.5" width="10" height="1.2" fill="#222"/></svg>
<div class="t" style="left:1707.5px;top:959.10px;font-size:10px;color:#111;font-weight:normal;">Formmodi:</div>
<div class="t" style="left:1707.5px;top:997.60px;font-size:10px;color:#111;font-weight:normal;">Pathfinder:</div>
<svg class="a" style="left:1701px;top:955px" width="214" height="80" viewBox="1701 955 214 80"><rect x="1713.5" y="974.5" width="9" height="9" fill="#f0f0f0" stroke="#555"/><rect x="1717.5" y="978.5" width="9" height="9" fill="#cfcfcf" stroke="#333"/><rect x="1714" y="975" width="8" height="8" fill="#e6e6e6"/><rect x="1749.5" y="978.5" width="9" height="9" fill="#e6e6e6" stroke="#aaa"/><rect x="1745.5" y="974.5" width="9" height="9" fill="#e8e8e8" stroke="#333"/><rect x="1777.5" y="974.5" width="9" height="9" fill="#eee" stroke="#777"/><rect x="1781.5" y="978.5" width="9" height="9" fill="#eee" stroke="#777"/><rect x="1781" y="978" width="6" height="6" fill="#111"/><rect x="1809.5" y="974.5" width="9" height="9" fill="#888" stroke="#333"/><rect x="1813.5" y="978.5" width="9" height="9" fill="#555" stroke="#111"/><rect x="1813" y="978" width="6" height="6" fill="#eee"/><rect x="1836.5" y="973.5" width="68" height="17" rx="2" fill="#ececec" stroke="#c4c4c4"/><rect x="1712.5" y="1012.5" width="9" height="9" fill="#eee" stroke="#111"/><circle cx="1723" cy="1021" r="5" fill="#ddd" stroke="#333"/><rect x="1713" y="1013" width="8" height="8" fill="#f2f2f2"/><rect x="1745.5" y="1012.5" width="9" height="9" fill="#eee" stroke="#111"/><circle cx="1756" cy="1021" r="5" fill="#ddd" stroke="#333"/><rect x="1746" y="1013" width="8" height="8" fill="#f2f2f2"/><rect x="1777.5" y="1012.5" width="9" height="9" fill="#eee" stroke="#111"/><circle cx="1788" cy="1021" r="5" fill="#ddd" stroke="#333"/><rect x="1778" y="1013" width="8" height="8" fill="#f2f2f2"/><rect x="1809.5" y="1012.5" width="9" height="9" fill="#eee" stroke="#111"/><circle cx="1820" cy="1021" r="5" fill="#ddd" stroke="#333"/><rect x="1810" y="1013" width="8" height="8" fill="#f2f2f2"/><rect x="1841.5" y="1012.5" width="9" height="9" fill="#eee" stroke="#111"/><circle cx="1852" cy="1021" r="5" fill="#ddd" stroke="#333"/><rect x="1842" y="1013" width="8" height="8" fill="#f2f2f2"/><path d="M1873.5 1012.5 h9 v4 l-5 5 h-4 Z" fill="#eee" stroke="#111"/></svg>
<div class="t" style="left:1844px;top:978.10px;font-size:10px;color:#a0a0a0;font-weight:normal;">Umwandeln</div>
</body></html>
